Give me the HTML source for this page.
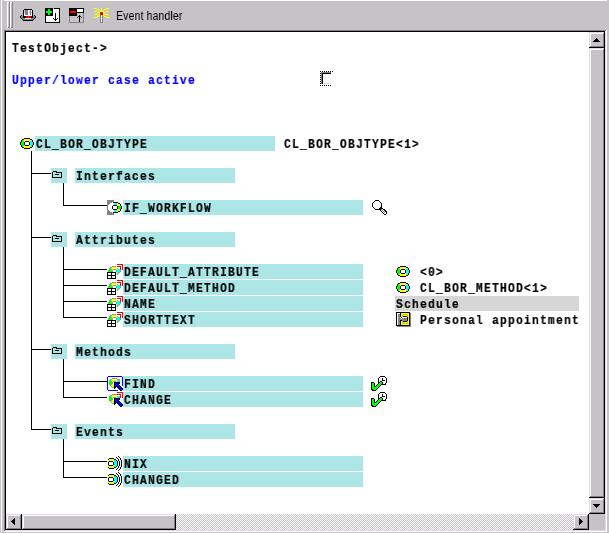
<!DOCTYPE html>
<html><head><meta charset="utf-8"><style>
html,body{margin:0;padding:0;}
body{width:609px;height:533px;overflow:hidden;background:#C6C3C6;position:relative;}
div,span,svg{position:absolute;}
.m{font-family:"Liberation Mono",monospace;font-weight:bold;font-size:13.333px;line-height:15px;white-space:pre;transform-origin:0 0;transform:scaleX(0.85);letter-spacing:1.4118px;-webkit-text-stroke:0.2px currentColor;margin-left:-0.4px;will-change:transform;}
.s{font-family:"Liberation Sans",sans-serif;font-size:12.5px;line-height:18px;white-space:pre;transform-origin:0 0;transform:scaleX(0.86);will-change:transform;}
</style></head><body>
<div style="left:1px;top:0px;width:1px;height:533px;background:#FFFFFF;"></div>
<div style="left:4px;top:0px;width:603px;height:1px;background:#FFFFFF;"></div>
<div style="left:7px;top:2px;width:1px;height:26px;background:#FFFFFF;"></div>
<div style="left:7px;top:2px;width:2px;height:1px;background:#FFFFFF;"></div>
<div style="left:9px;top:2px;width:1px;height:26px;background:#848284;"></div>
<div style="left:8px;top:27px;width:2px;height:1px;background:#848284;"></div>
<div style="left:10px;top:2px;width:1px;height:26px;background:#FFFFFF;"></div>
<div style="left:10px;top:2px;width:2px;height:1px;background:#FFFFFF;"></div>
<div style="left:12px;top:2px;width:1px;height:26px;background:#848284;"></div>
<div style="left:11px;top:27px;width:2px;height:1px;background:#848284;"></div>
<div style="left:4px;top:30px;width:602px;height:1px;background:#848284;"></div>
<div style="left:4px;top:30px;width:1px;height:501px;background:#848284;"></div>
<div style="left:4px;top:531px;width:603px;height:1px;background:#FFFFFF;"></div>
<div style="left:606px;top:30px;width:1px;height:502px;background:#FFFFFF;"></div>
<div style="left:5px;top:31px;width:600px;height:1px;background:#000000;"></div>
<div style="left:5px;top:31px;width:1px;height:499px;background:#000000;"></div>
<div style="left:5px;top:530px;width:601px;height:1px;background:#DEDBDE;"></div>
<div style="left:605px;top:31px;width:1px;height:500px;background:#DEDBDE;"></div>
<div style="left:6px;top:32px;width:583px;height:482px;background:#FFFFFF;"></div>
<div style="left:589px;top:32px;width:16px;height:16px;background:#C6C3C6;"></div>
<div style="left:589px;top:32px;width:16px;height:1px;background:#DEDBDE;"></div>
<div style="left:589px;top:32px;width:1px;height:16px;background:#DEDBDE;"></div>
<div style="left:590px;top:33px;width:14px;height:1px;background:#FFFFFF;"></div>
<div style="left:590px;top:33px;width:1px;height:14px;background:#FFFFFF;"></div>
<div style="left:590px;top:46px;width:14px;height:1px;background:#848284;"></div>
<div style="left:603px;top:33px;width:1px;height:14px;background:#848284;"></div>
<div style="left:589px;top:47px;width:16px;height:1px;background:#000000;"></div>
<div style="left:604px;top:32px;width:1px;height:16px;background:#000000;"></div>
<div style="left:589px;top:48px;width:16px;height:450px;background:#C6C3C6;"></div>
<div style="left:589px;top:48px;width:16px;height:1px;background:#DEDBDE;"></div>
<div style="left:589px;top:48px;width:1px;height:450px;background:#DEDBDE;"></div>
<div style="left:590px;top:49px;width:14px;height:1px;background:#FFFFFF;"></div>
<div style="left:590px;top:49px;width:1px;height:448px;background:#FFFFFF;"></div>
<div style="left:590px;top:496px;width:14px;height:1px;background:#848284;"></div>
<div style="left:603px;top:49px;width:1px;height:448px;background:#848284;"></div>
<div style="left:589px;top:497px;width:16px;height:1px;background:#000000;"></div>
<div style="left:604px;top:48px;width:1px;height:450px;background:#000000;"></div>
<div style="left:589px;top:498px;width:16px;height:16px;background:#C6C3C6;"></div>
<div style="left:589px;top:498px;width:16px;height:1px;background:#DEDBDE;"></div>
<div style="left:589px;top:498px;width:1px;height:16px;background:#DEDBDE;"></div>
<div style="left:590px;top:499px;width:14px;height:1px;background:#FFFFFF;"></div>
<div style="left:590px;top:499px;width:1px;height:14px;background:#FFFFFF;"></div>
<div style="left:590px;top:512px;width:14px;height:1px;background:#848284;"></div>
<div style="left:603px;top:499px;width:1px;height:14px;background:#848284;"></div>
<div style="left:589px;top:513px;width:16px;height:1px;background:#000000;"></div>
<div style="left:604px;top:498px;width:1px;height:16px;background:#000000;"></div>
<div style="left:6px;top:514px;width:16px;height:16px;background:#C6C3C6;"></div>
<div style="left:6px;top:514px;width:16px;height:1px;background:#DEDBDE;"></div>
<div style="left:6px;top:514px;width:1px;height:16px;background:#DEDBDE;"></div>
<div style="left:7px;top:515px;width:14px;height:1px;background:#FFFFFF;"></div>
<div style="left:7px;top:515px;width:1px;height:14px;background:#FFFFFF;"></div>
<div style="left:7px;top:528px;width:14px;height:1px;background:#848284;"></div>
<div style="left:20px;top:515px;width:1px;height:14px;background:#848284;"></div>
<div style="left:6px;top:529px;width:16px;height:1px;background:#000000;"></div>
<div style="left:21px;top:514px;width:1px;height:16px;background:#000000;"></div>
<div style="left:22px;top:514px;width:154px;height:16px;background:#C6C3C6;"></div>
<div style="left:22px;top:514px;width:154px;height:1px;background:#DEDBDE;"></div>
<div style="left:22px;top:514px;width:1px;height:16px;background:#DEDBDE;"></div>
<div style="left:23px;top:515px;width:152px;height:1px;background:#FFFFFF;"></div>
<div style="left:23px;top:515px;width:1px;height:14px;background:#FFFFFF;"></div>
<div style="left:23px;top:528px;width:152px;height:1px;background:#848284;"></div>
<div style="left:174px;top:515px;width:1px;height:14px;background:#848284;"></div>
<div style="left:22px;top:529px;width:154px;height:1px;background:#000000;"></div>
<div style="left:175px;top:514px;width:1px;height:16px;background:#000000;"></div>
<div style="left:176px;top:514px;width:397px;height:16px;background-color:#FFFFFF;background-image:linear-gradient(45deg,#C6C3C6 25%,transparent 25%,transparent 75%,#C6C3C6 75%),linear-gradient(45deg,#C6C3C6 25%,transparent 25%,transparent 75%,#C6C3C6 75%);background-size:2px 2px;background-position:0 0,1px 1px;"></div>
<div style="left:573px;top:514px;width:16px;height:16px;background:#C6C3C6;"></div>
<div style="left:573px;top:514px;width:16px;height:1px;background:#DEDBDE;"></div>
<div style="left:573px;top:514px;width:1px;height:16px;background:#DEDBDE;"></div>
<div style="left:574px;top:515px;width:14px;height:1px;background:#FFFFFF;"></div>
<div style="left:574px;top:515px;width:1px;height:14px;background:#FFFFFF;"></div>
<div style="left:574px;top:528px;width:14px;height:1px;background:#848284;"></div>
<div style="left:587px;top:515px;width:1px;height:14px;background:#848284;"></div>
<div style="left:573px;top:529px;width:16px;height:1px;background:#000000;"></div>
<div style="left:588px;top:514px;width:1px;height:16px;background:#000000;"></div>
<div style="left:589px;top:514px;width:16px;height:16px;background:#C6C3C6;"></div>
<svg style="position:absolute;left:593px;top:38px" width="7" height="4" shape-rendering="crispEdges"><rect x="3" y="0" width="1" height="1" fill="#000000"/><rect x="2" y="1" width="3" height="1" fill="#000000"/><rect x="1" y="2" width="5" height="1" fill="#000000"/><rect x="0" y="3" width="7" height="1" fill="#000000"/></svg>
<svg style="position:absolute;left:593px;top:504px" width="7" height="4" shape-rendering="crispEdges"><rect x="0" y="0" width="7" height="1" fill="#000000"/><rect x="1" y="1" width="5" height="1" fill="#000000"/><rect x="2" y="2" width="3" height="1" fill="#000000"/><rect x="3" y="3" width="1" height="1" fill="#000000"/></svg>
<svg style="position:absolute;left:11px;top:518px" width="4" height="7" shape-rendering="crispEdges"><rect x="3" y="0" width="1" height="1" fill="#000000"/><rect x="2" y="1" width="2" height="1" fill="#000000"/><rect x="1" y="2" width="3" height="1" fill="#000000"/><rect x="0" y="3" width="4" height="1" fill="#000000"/><rect x="1" y="4" width="3" height="1" fill="#000000"/><rect x="2" y="5" width="2" height="1" fill="#000000"/><rect x="3" y="6" width="1" height="1" fill="#000000"/></svg>
<svg style="position:absolute;left:579px;top:518px" width="4" height="7" shape-rendering="crispEdges"><rect x="0" y="0" width="1" height="1" fill="#000000"/><rect x="0" y="1" width="2" height="1" fill="#000000"/><rect x="0" y="2" width="3" height="1" fill="#000000"/><rect x="0" y="3" width="4" height="1" fill="#000000"/><rect x="0" y="4" width="3" height="1" fill="#000000"/><rect x="0" y="5" width="2" height="1" fill="#000000"/><rect x="0" y="6" width="1" height="1" fill="#000000"/></svg>
<svg style="position:absolute;left:19px;top:8px" width="17" height="13" shape-rendering="crispEdges"><rect x="5" y="1" width="8" height="1" fill="#000000"/><rect x="4" y="2" width="1" height="1" fill="#000000"/><rect x="5" y="2" width="1" height="1" fill="#C6C3C6"/><rect x="6" y="2" width="3" height="1" fill="#848284"/><rect x="9" y="2" width="2" height="1" fill="#FFFFFF"/><rect x="11" y="2" width="1" height="1" fill="#848284"/><rect x="12" y="2" width="1" height="1" fill="#FFFFFF"/><rect x="13" y="2" width="1" height="1" fill="#000000"/><rect x="4" y="3" width="1" height="1" fill="#000000"/><rect x="5" y="3" width="1" height="1" fill="#C6C3C6"/><rect x="6" y="3" width="3" height="1" fill="#848284"/><rect x="9" y="3" width="1" height="1" fill="#FFFFFF"/><rect x="10" y="3" width="1" height="1" fill="#C6C3C6"/><rect x="11" y="3" width="1" height="1" fill="#848284"/><rect x="12" y="3" width="1" height="1" fill="#FFFFFF"/><rect x="13" y="3" width="1" height="1" fill="#000000"/><rect x="4" y="4" width="1" height="1" fill="#000000"/><rect x="5" y="4" width="1" height="1" fill="#C6C3C6"/><rect x="6" y="4" width="3" height="1" fill="#848284"/><rect x="9" y="4" width="1" height="1" fill="#FFFFFF"/><rect x="10" y="4" width="1" height="1" fill="#C6C3C6"/><rect x="11" y="4" width="1" height="1" fill="#848284"/><rect x="12" y="4" width="1" height="1" fill="#C6C3C6"/><rect x="13" y="4" width="1" height="1" fill="#000000"/><rect x="4" y="5" width="1" height="1" fill="#000000"/><rect x="5" y="5" width="1" height="1" fill="#FFFFFF"/><rect x="6" y="5" width="3" height="1" fill="#848284"/><rect x="9" y="5" width="2" height="1" fill="#FFFFFF"/><rect x="11" y="5" width="1" height="1" fill="#848284"/><rect x="12" y="5" width="1" height="1" fill="#FFFFFF"/><rect x="13" y="5" width="1" height="1" fill="#000000"/><rect x="4" y="6" width="1" height="1" fill="#000000"/><rect x="5" y="6" width="1" height="1" fill="#FFFFFF"/><rect x="6" y="6" width="3" height="1" fill="#848284"/><rect x="9" y="6" width="2" height="1" fill="#FFFFFF"/><rect x="11" y="6" width="1" height="1" fill="#848284"/><rect x="12" y="6" width="1" height="1" fill="#FFFFFF"/><rect x="13" y="6" width="1" height="1" fill="#000000"/><rect x="2" y="7" width="1" height="1" fill="#000000"/><rect x="4" y="7" width="1" height="1" fill="#000000"/><rect x="5" y="7" width="8" height="1" fill="#FFFFFF"/><rect x="13" y="7" width="1" height="1" fill="#000000"/><rect x="15" y="7" width="1" height="1" fill="#000000"/><rect x="1" y="8" width="1" height="1" fill="#000000"/><rect x="2" y="8" width="2" height="1" fill="#848284"/><rect x="4" y="8" width="3" height="1" fill="#000000"/><rect x="7" y="8" width="5" height="1" fill="#FF0000"/><rect x="12" y="8" width="2" height="1" fill="#000000"/><rect x="14" y="8" width="2" height="1" fill="#848284"/><rect x="16" y="8" width="1" height="1" fill="#000000"/><rect x="1" y="9" width="1" height="1" fill="#000000"/><rect x="2" y="9" width="2" height="1" fill="#848284"/><rect x="4" y="9" width="3" height="1" fill="#000000"/><rect x="7" y="9" width="5" height="1" fill="#FF0000"/><rect x="12" y="9" width="2" height="1" fill="#000000"/><rect x="14" y="9" width="2" height="1" fill="#848284"/><rect x="16" y="9" width="1" height="1" fill="#000000"/><rect x="2" y="10" width="1" height="1" fill="#000000"/><rect x="3" y="10" width="3" height="1" fill="#848284"/><rect x="6" y="10" width="6" height="1" fill="#FFFFFF"/><rect x="12" y="10" width="3" height="1" fill="#848284"/><rect x="15" y="10" width="1" height="1" fill="#000000"/><rect x="3" y="11" width="1" height="1" fill="#000000"/><rect x="4" y="11" width="10" height="1" fill="#848284"/><rect x="14" y="11" width="1" height="1" fill="#000000"/><rect x="4" y="12" width="10" height="1" fill="#000000"/></svg>
<svg style="position:absolute;left:45px;top:8px" width="15" height="15" shape-rendering="crispEdges"><rect x="0" y="0" width="8" height="1" fill="#000000"/><rect x="9" y="0" width="6" height="1" fill="#000000"/><rect x="0" y="1" width="3" height="1" fill="#000000"/><rect x="3" y="1" width="2" height="1" fill="#00FF00"/><rect x="5" y="1" width="3" height="1" fill="#000000"/><rect x="8" y="1" width="6" height="1" fill="#FFFFFF"/><rect x="14" y="1" width="1" height="1" fill="#000000"/><rect x="0" y="2" width="3" height="1" fill="#000000"/><rect x="3" y="2" width="2" height="1" fill="#00FF00"/><rect x="5" y="2" width="3" height="1" fill="#000000"/><rect x="8" y="2" width="6" height="1" fill="#FFFFFF"/><rect x="14" y="2" width="1" height="1" fill="#000000"/><rect x="0" y="3" width="1" height="1" fill="#000000"/><rect x="1" y="3" width="6" height="1" fill="#00FF00"/><rect x="7" y="3" width="1" height="1" fill="#000000"/><rect x="8" y="3" width="6" height="1" fill="#FFFFFF"/><rect x="14" y="3" width="1" height="1" fill="#000000"/><rect x="0" y="4" width="1" height="1" fill="#000000"/><rect x="1" y="4" width="6" height="1" fill="#00FF00"/><rect x="7" y="4" width="1" height="1" fill="#000000"/><rect x="8" y="4" width="6" height="1" fill="#FFFFFF"/><rect x="14" y="4" width="1" height="1" fill="#000000"/><rect x="0" y="5" width="3" height="1" fill="#000000"/><rect x="3" y="5" width="2" height="1" fill="#00FF00"/><rect x="5" y="5" width="3" height="1" fill="#000000"/><rect x="8" y="5" width="2" height="1" fill="#FFFFFF"/><rect x="10" y="5" width="1" height="1" fill="#000000"/><rect x="11" y="5" width="3" height="1" fill="#FFFFFF"/><rect x="14" y="5" width="1" height="1" fill="#000000"/><rect x="0" y="6" width="3" height="1" fill="#000000"/><rect x="3" y="6" width="2" height="1" fill="#00FF00"/><rect x="5" y="6" width="3" height="1" fill="#000000"/><rect x="8" y="6" width="2" height="1" fill="#FFFFFF"/><rect x="10" y="6" width="1" height="1" fill="#000000"/><rect x="11" y="6" width="3" height="1" fill="#FFFFFF"/><rect x="14" y="6" width="1" height="1" fill="#000000"/><rect x="0" y="7" width="8" height="1" fill="#000000"/><rect x="8" y="7" width="2" height="1" fill="#FFFFFF"/><rect x="10" y="7" width="1" height="1" fill="#000000"/><rect x="11" y="7" width="3" height="1" fill="#FFFFFF"/><rect x="14" y="7" width="1" height="1" fill="#000000"/><rect x="0" y="8" width="1" height="1" fill="#000000"/><rect x="1" y="8" width="9" height="1" fill="#FFFFFF"/><rect x="10" y="8" width="1" height="1" fill="#000000"/><rect x="11" y="8" width="3" height="1" fill="#FFFFFF"/><rect x="14" y="8" width="1" height="1" fill="#000000"/><rect x="0" y="9" width="1" height="1" fill="#000000"/><rect x="1" y="9" width="9" height="1" fill="#FFFFFF"/><rect x="10" y="9" width="1" height="1" fill="#000000"/><rect x="11" y="9" width="3" height="1" fill="#FFFFFF"/><rect x="14" y="9" width="1" height="1" fill="#000000"/><rect x="0" y="10" width="1" height="1" fill="#000000"/><rect x="1" y="10" width="7" height="1" fill="#FFFFFF"/><rect x="8" y="10" width="1" height="1" fill="#000000"/><rect x="9" y="10" width="1" height="1" fill="#FFFFFF"/><rect x="10" y="10" width="1" height="1" fill="#000000"/><rect x="11" y="10" width="1" height="1" fill="#FFFFFF"/><rect x="12" y="10" width="1" height="1" fill="#000000"/><rect x="13" y="10" width="1" height="1" fill="#FFFFFF"/><rect x="14" y="10" width="1" height="1" fill="#000000"/><rect x="0" y="11" width="1" height="1" fill="#000000"/><rect x="1" y="11" width="8" height="1" fill="#FFFFFF"/><rect x="9" y="11" width="3" height="1" fill="#000000"/><rect x="12" y="11" width="2" height="1" fill="#FFFFFF"/><rect x="14" y="11" width="1" height="1" fill="#000000"/><rect x="0" y="12" width="1" height="1" fill="#000000"/><rect x="1" y="12" width="9" height="1" fill="#FFFFFF"/><rect x="10" y="12" width="1" height="1" fill="#000000"/><rect x="11" y="12" width="3" height="1" fill="#FFFFFF"/><rect x="14" y="12" width="1" height="1" fill="#000000"/><rect x="0" y="13" width="1" height="1" fill="#000000"/><rect x="1" y="13" width="13" height="1" fill="#FFFFFF"/><rect x="14" y="13" width="1" height="1" fill="#000000"/><rect x="0" y="14" width="15" height="1" fill="#000000"/></svg>
<svg style="position:absolute;left:69px;top:8px" width="15" height="15" shape-rendering="crispEdges"><rect x="0" y="0" width="15" height="1" fill="#000000"/><rect x="0" y="1" width="8" height="1" fill="#000000"/><rect x="8" y="1" width="6" height="1" fill="#FFFFFF"/><rect x="14" y="1" width="1" height="1" fill="#000000"/><rect x="0" y="2" width="8" height="1" fill="#000000"/><rect x="8" y="2" width="6" height="1" fill="#FFFFFF"/><rect x="14" y="2" width="1" height="1" fill="#000000"/><rect x="0" y="3" width="1" height="1" fill="#000000"/><rect x="1" y="3" width="6" height="1" fill="#FF0000"/><rect x="7" y="3" width="1" height="1" fill="#000000"/><rect x="8" y="3" width="6" height="1" fill="#FFFFFF"/><rect x="14" y="3" width="1" height="1" fill="#000000"/><rect x="0" y="4" width="1" height="1" fill="#000000"/><rect x="1" y="4" width="6" height="1" fill="#FF0000"/><rect x="7" y="4" width="8" height="1" fill="#000000"/><rect x="0" y="5" width="8" height="1" fill="#000000"/><rect x="8" y="5" width="6" height="1" fill="#C6C3C6"/><rect x="14" y="5" width="1" height="1" fill="#848284"/><rect x="0" y="6" width="8" height="1" fill="#000000"/><rect x="8" y="6" width="6" height="1" fill="#C6C3C6"/><rect x="14" y="6" width="1" height="1" fill="#848284"/><rect x="0" y="7" width="8" height="1" fill="#000000"/><rect x="8" y="7" width="2" height="1" fill="#C6C3C6"/><rect x="10" y="7" width="1" height="1" fill="#000000"/><rect x="11" y="7" width="3" height="1" fill="#C6C3C6"/><rect x="14" y="7" width="1" height="1" fill="#848284"/><rect x="0" y="8" width="1" height="1" fill="#848284"/><rect x="1" y="8" width="8" height="1" fill="#C6C3C6"/><rect x="9" y="8" width="3" height="1" fill="#000000"/><rect x="12" y="8" width="2" height="1" fill="#C6C3C6"/><rect x="14" y="8" width="1" height="1" fill="#848284"/><rect x="0" y="9" width="1" height="1" fill="#848284"/><rect x="1" y="9" width="7" height="1" fill="#C6C3C6"/><rect x="8" y="9" width="1" height="1" fill="#000000"/><rect x="9" y="9" width="1" height="1" fill="#C6C3C6"/><rect x="10" y="9" width="1" height="1" fill="#000000"/><rect x="11" y="9" width="1" height="1" fill="#C6C3C6"/><rect x="12" y="9" width="1" height="1" fill="#000000"/><rect x="13" y="9" width="1" height="1" fill="#C6C3C6"/><rect x="14" y="9" width="1" height="1" fill="#848284"/><rect x="0" y="10" width="1" height="1" fill="#848284"/><rect x="1" y="10" width="9" height="1" fill="#C6C3C6"/><rect x="10" y="10" width="1" height="1" fill="#000000"/><rect x="11" y="10" width="3" height="1" fill="#C6C3C6"/><rect x="14" y="10" width="1" height="1" fill="#848284"/><rect x="0" y="11" width="1" height="1" fill="#848284"/><rect x="1" y="11" width="9" height="1" fill="#C6C3C6"/><rect x="10" y="11" width="1" height="1" fill="#000000"/><rect x="11" y="11" width="3" height="1" fill="#C6C3C6"/><rect x="14" y="11" width="1" height="1" fill="#848284"/><rect x="0" y="12" width="1" height="1" fill="#848284"/><rect x="1" y="12" width="9" height="1" fill="#C6C3C6"/><rect x="10" y="12" width="1" height="1" fill="#000000"/><rect x="11" y="12" width="3" height="1" fill="#C6C3C6"/><rect x="14" y="12" width="1" height="1" fill="#848284"/><rect x="0" y="13" width="1" height="1" fill="#848284"/><rect x="1" y="13" width="9" height="1" fill="#C6C3C6"/><rect x="10" y="13" width="1" height="1" fill="#000000"/><rect x="11" y="13" width="3" height="1" fill="#C6C3C6"/><rect x="14" y="13" width="1" height="1" fill="#848284"/><rect x="0" y="14" width="15" height="1" fill="#848284"/></svg>
<svg style="position:absolute;left:94px;top:8px" width="15" height="15" shape-rendering="crispEdges"><rect x="0" y="0" width="3" height="1" fill="#FFFF00"/><rect x="7" y="0" width="1" height="1" fill="#FFFF00"/><rect x="12" y="0" width="3" height="1" fill="#FFFF00"/><rect x="3" y="1" width="2" height="1" fill="#FFFF00"/><rect x="7" y="1" width="1" height="1" fill="#FFFF00"/><rect x="10" y="1" width="2" height="1" fill="#FFFF00"/><rect x="5" y="2" width="1" height="1" fill="#FFFF00"/><rect x="7" y="2" width="1" height="1" fill="#FFFF00"/><rect x="9" y="2" width="1" height="1" fill="#FFFF00"/><rect x="0" y="3" width="3" height="1" fill="#FFFF00"/><rect x="5" y="3" width="5" height="1" fill="#FFFF00"/><rect x="12" y="3" width="3" height="1" fill="#FFFF00"/><rect x="3" y="4" width="3" height="1" fill="#FFFF00"/><rect x="6" y="4" width="3" height="1" fill="#FF0000"/><rect x="9" y="4" width="3" height="1" fill="#FFFF00"/><rect x="5" y="5" width="1" height="1" fill="#FFFF00"/><rect x="6" y="5" width="1" height="1" fill="#FF0000"/><rect x="7" y="5" width="2" height="1" fill="#C60000"/><rect x="9" y="5" width="1" height="1" fill="#FFFF00"/><rect x="0" y="6" width="6" height="1" fill="#FFFF00"/><rect x="6" y="6" width="1" height="1" fill="#FF0000"/><rect x="7" y="6" width="2" height="1" fill="#C60000"/><rect x="9" y="6" width="6" height="1" fill="#FFFF00"/><rect x="5" y="7" width="1" height="1" fill="#FFFF00"/><rect x="6" y="7" width="1" height="1" fill="#848284"/><rect x="7" y="7" width="1" height="1" fill="#FFFFFF"/><rect x="8" y="7" width="1" height="1" fill="#848284"/><rect x="9" y="7" width="1" height="1" fill="#FFFF00"/><rect x="3" y="8" width="2" height="1" fill="#FFFF00"/><rect x="6" y="8" width="1" height="1" fill="#848284"/><rect x="7" y="8" width="1" height="1" fill="#FFFFFF"/><rect x="8" y="8" width="1" height="1" fill="#848284"/><rect x="10" y="8" width="2" height="1" fill="#FFFF00"/><rect x="0" y="9" width="3" height="1" fill="#FFFF00"/><rect x="6" y="9" width="1" height="1" fill="#848284"/><rect x="7" y="9" width="1" height="1" fill="#FFFFFF"/><rect x="8" y="9" width="1" height="1" fill="#848284"/><rect x="12" y="9" width="3" height="1" fill="#FFFF00"/><rect x="6" y="10" width="1" height="1" fill="#848284"/><rect x="7" y="10" width="1" height="1" fill="#FFFFFF"/><rect x="8" y="10" width="1" height="1" fill="#848284"/><rect x="6" y="11" width="1" height="1" fill="#848284"/><rect x="7" y="11" width="1" height="1" fill="#FFFFFF"/><rect x="8" y="11" width="1" height="1" fill="#848284"/><rect x="6" y="12" width="1" height="1" fill="#848284"/><rect x="7" y="12" width="1" height="1" fill="#FFFFFF"/><rect x="8" y="12" width="1" height="1" fill="#848284"/><rect x="6" y="13" width="1" height="1" fill="#848284"/><rect x="7" y="13" width="1" height="1" fill="#FFFFFF"/><rect x="8" y="13" width="1" height="1" fill="#848284"/><rect x="6" y="14" width="3" height="1" fill="#848284"/></svg>
<span class="s" style="left:116px;top:7px;color:#000">Event handler</span>
<span class="m" style="left:12px;top:41px;color:#000">TestObject-&gt;</span>
<span class="m" style="left:12px;top:73px;color:#0000FF">Upper/lower case active</span>
<div style="left:320px;top:71px;width:1px;height:1px;background:#000;"></div>
<div style="left:322px;top:71px;width:1px;height:1px;background:#000;"></div>
<div style="left:324px;top:71px;width:1px;height:1px;background:#000;"></div>
<div style="left:326px;top:71px;width:1px;height:1px;background:#000;"></div>
<div style="left:328px;top:71px;width:1px;height:1px;background:#000;"></div>
<div style="left:330px;top:71px;width:1px;height:1px;background:#000;"></div>
<div style="left:332px;top:71px;width:1px;height:1px;background:#000;"></div>
<div style="left:320px;top:73px;width:1px;height:1px;background:#000;"></div>
<div style="left:320px;top:75px;width:1px;height:1px;background:#000;"></div>
<div style="left:320px;top:77px;width:1px;height:1px;background:#000;"></div>
<div style="left:320px;top:79px;width:1px;height:1px;background:#000;"></div>
<div style="left:320px;top:81px;width:1px;height:1px;background:#000;"></div>
<div style="left:320px;top:83px;width:1px;height:1px;background:#000;"></div>
<div style="left:320px;top:85px;width:1px;height:1px;background:#000;"></div>
<div style="left:322px;top:85px;width:1px;height:1px;background:#000;"></div>
<div style="left:324px;top:85px;width:1px;height:1px;background:#000;"></div>
<div style="left:326px;top:85px;width:1px;height:1px;background:#000;"></div>
<div style="left:328px;top:85px;width:1px;height:1px;background:#000;"></div>
<div style="left:330px;top:85px;width:1px;height:1px;background:#000;"></div>
<div style="left:321px;top:72px;width:10px;height:1px;background:#848284;"></div>
<div style="left:321px;top:72px;width:1px;height:12px;background:#848284;"></div>
<div style="left:322px;top:73px;width:9px;height:1px;background:#000;"></div>
<div style="left:322px;top:73px;width:1px;height:11px;background:#000;"></div>
<div style="left:323px;top:83px;width:8px;height:1px;background:#DEDBDE;"></div>
<svg style="position:absolute;left:20px;top:138px" width="14" height="11" shape-rendering="crispEdges"><rect x="4" y="0" width="6" height="1" fill="#000000"/><rect x="2" y="1" width="2" height="1" fill="#000000"/><rect x="4" y="1" width="6" height="1" fill="#FFFF00"/><rect x="10" y="1" width="2" height="1" fill="#000000"/><rect x="1" y="2" width="1" height="1" fill="#000000"/><rect x="2" y="2" width="1" height="1" fill="#00FF00"/><rect x="3" y="2" width="8" height="1" fill="#FFFF00"/><rect x="11" y="2" width="1" height="1" fill="#00FFFF"/><rect x="12" y="2" width="1" height="1" fill="#000000"/><rect x="1" y="3" width="1" height="1" fill="#000000"/><rect x="2" y="3" width="2" height="1" fill="#00FF00"/><rect x="4" y="3" width="1" height="1" fill="#FFFF00"/><rect x="5" y="3" width="4" height="1" fill="#000000"/><rect x="9" y="3" width="1" height="1" fill="#FFFF00"/><rect x="10" y="3" width="2" height="1" fill="#00FFFF"/><rect x="12" y="3" width="1" height="1" fill="#000000"/><rect x="0" y="4" width="1" height="1" fill="#000000"/><rect x="1" y="4" width="3" height="1" fill="#00FF00"/><rect x="4" y="4" width="1" height="1" fill="#000000"/><rect x="5" y="4" width="4" height="1" fill="#FFFFFF"/><rect x="9" y="4" width="1" height="1" fill="#000000"/><rect x="10" y="4" width="3" height="1" fill="#00FFFF"/><rect x="13" y="4" width="1" height="1" fill="#000000"/><rect x="0" y="5" width="1" height="1" fill="#000000"/><rect x="1" y="5" width="3" height="1" fill="#00FF00"/><rect x="4" y="5" width="1" height="1" fill="#000000"/><rect x="5" y="5" width="4" height="1" fill="#FFFFFF"/><rect x="9" y="5" width="1" height="1" fill="#000000"/><rect x="10" y="5" width="3" height="1" fill="#00FFFF"/><rect x="13" y="5" width="1" height="1" fill="#000000"/><rect x="0" y="6" width="1" height="1" fill="#000000"/><rect x="1" y="6" width="3" height="1" fill="#00FF00"/><rect x="4" y="6" width="1" height="1" fill="#000000"/><rect x="5" y="6" width="4" height="1" fill="#FFFFFF"/><rect x="9" y="6" width="1" height="1" fill="#000000"/><rect x="10" y="6" width="3" height="1" fill="#00FFFF"/><rect x="13" y="6" width="1" height="1" fill="#000000"/><rect x="1" y="7" width="1" height="1" fill="#000000"/><rect x="2" y="7" width="2" height="1" fill="#00FF00"/><rect x="4" y="7" width="1" height="1" fill="#FFFF00"/><rect x="5" y="7" width="4" height="1" fill="#000000"/><rect x="9" y="7" width="1" height="1" fill="#FFFF00"/><rect x="10" y="7" width="2" height="1" fill="#00FFFF"/><rect x="12" y="7" width="1" height="1" fill="#000000"/><rect x="1" y="8" width="1" height="1" fill="#000000"/><rect x="2" y="8" width="1" height="1" fill="#00FF00"/><rect x="3" y="8" width="8" height="1" fill="#FFFF00"/><rect x="11" y="8" width="1" height="1" fill="#00FFFF"/><rect x="12" y="8" width="1" height="1" fill="#000000"/><rect x="2" y="9" width="2" height="1" fill="#000000"/><rect x="4" y="9" width="6" height="1" fill="#FFFF00"/><rect x="10" y="9" width="2" height="1" fill="#000000"/><rect x="4" y="10" width="6" height="1" fill="#000000"/></svg>
<div style="left:35px;top:136px;width:240px;height:15px;background:#ADE6E6;"></div>
<span class="m" style="left:36px;top:137px;color:#000">CL_BOR_OBJTYPE</span>
<span class="m" style="left:284px;top:137px;color:#000">CL_BOR_OBJTYPE&lt;1&gt;</span>
<div style="left:31px;top:151px;width:1px;height:279px;background:#000000;"></div>
<div style="left:31px;top:173px;width:20px;height:1px;background:#000000;"></div>
<div style="left:51px;top:168px;width:16px;height:15px;background:#ADE6E6;"></div>
<svg style="position:absolute;left:50px;top:171px" width="12" height="7" shape-rendering="crispEdges"><rect x="3" y="0" width="4" height="1" fill="#000000"/><rect x="2" y="1" width="1" height="1" fill="#000000"/><rect x="6" y="1" width="6" height="1" fill="#000000"/><rect x="2" y="2" width="1" height="1" fill="#000000"/><rect x="11" y="2" width="1" height="1" fill="#000000"/><rect x="2" y="3" width="1" height="1" fill="#000000"/><rect x="5" y="3" width="4" height="1" fill="#000000"/><rect x="11" y="3" width="1" height="1" fill="#000000"/><rect x="2" y="4" width="1" height="1" fill="#000000"/><rect x="11" y="4" width="1" height="1" fill="#000000"/><rect x="2" y="5" width="1" height="1" fill="#000000"/><rect x="11" y="5" width="1" height="1" fill="#000000"/><rect x="2" y="6" width="10" height="1" fill="#000000"/></svg>
<div style="left:75px;top:168px;width:160px;height:15px;background:#ADE6E6;"></div>
<span class="m" style="left:76px;top:169px;color:#000">Interfaces</span>
<div style="left:63px;top:183px;width:1px;height:23px;background:#000000;"></div>
<div style="left:63px;top:205px;width:44px;height:1px;background:#000000;"></div>
<div style="left:123px;top:200px;width:240px;height:15px;background:#ADE6E6;"></div>
<span class="m" style="left:124px;top:201px;color:#000">IF_WORKFLOW</span>
<svg style="position:absolute;left:106px;top:200px" width="17" height="15" shape-rendering="crispEdges"><rect x="1" y="0" width="7" height="1" fill="#848284"/><rect x="1" y="1" width="7" height="1" fill="#848284"/><rect x="1" y="2" width="5" height="1" fill="#848284"/><rect x="6" y="2" width="1" height="1" fill="#FFFFFF"/><rect x="7" y="2" width="5" height="1" fill="#000000"/><rect x="1" y="3" width="3" height="1" fill="#848284"/><rect x="4" y="3" width="4" height="1" fill="#FFFFFF"/><rect x="8" y="3" width="3" height="1" fill="#00FFFF"/><rect x="11" y="3" width="1" height="1" fill="#FFFF00"/><rect x="12" y="3" width="2" height="1" fill="#000000"/><rect x="1" y="4" width="2" height="1" fill="#848284"/><rect x="3" y="4" width="5" height="1" fill="#FFFFFF"/><rect x="8" y="4" width="3" height="1" fill="#00FFFF"/><rect x="11" y="4" width="3" height="1" fill="#FFFF00"/><rect x="14" y="4" width="1" height="1" fill="#000000"/><rect x="1" y="5" width="1" height="1" fill="#848284"/><rect x="2" y="5" width="5" height="1" fill="#FFFFFF"/><rect x="7" y="5" width="4" height="1" fill="#000000"/><rect x="11" y="5" width="3" height="1" fill="#FFFF00"/><rect x="14" y="5" width="1" height="1" fill="#000000"/><rect x="1" y="6" width="1" height="1" fill="#848284"/><rect x="2" y="6" width="4" height="1" fill="#FFFFFF"/><rect x="6" y="6" width="1" height="1" fill="#000000"/><rect x="7" y="6" width="4" height="1" fill="#FFFFFF"/><rect x="11" y="6" width="1" height="1" fill="#000000"/><rect x="12" y="6" width="3" height="1" fill="#00FF00"/><rect x="15" y="6" width="1" height="1" fill="#000000"/><rect x="1" y="7" width="1" height="1" fill="#848284"/><rect x="2" y="7" width="4" height="1" fill="#FFFFFF"/><rect x="6" y="7" width="1" height="1" fill="#000000"/><rect x="7" y="7" width="4" height="1" fill="#FFFFFF"/><rect x="11" y="7" width="1" height="1" fill="#000000"/><rect x="12" y="7" width="3" height="1" fill="#00FF00"/><rect x="15" y="7" width="1" height="1" fill="#000000"/><rect x="1" y="8" width="1" height="1" fill="#848284"/><rect x="2" y="8" width="4" height="1" fill="#FFFFFF"/><rect x="6" y="8" width="1" height="1" fill="#000000"/><rect x="7" y="8" width="4" height="1" fill="#FFFFFF"/><rect x="11" y="8" width="1" height="1" fill="#000000"/><rect x="12" y="8" width="3" height="1" fill="#00FF00"/><rect x="15" y="8" width="1" height="1" fill="#000000"/><rect x="1" y="9" width="1" height="1" fill="#848284"/><rect x="2" y="9" width="5" height="1" fill="#FFFFFF"/><rect x="7" y="9" width="4" height="1" fill="#000000"/><rect x="11" y="9" width="3" height="1" fill="#FFFF00"/><rect x="14" y="9" width="1" height="1" fill="#000000"/><rect x="1" y="10" width="2" height="1" fill="#848284"/><rect x="3" y="10" width="5" height="1" fill="#FFFFFF"/><rect x="8" y="10" width="3" height="1" fill="#00FFFF"/><rect x="11" y="10" width="3" height="1" fill="#FFFF00"/><rect x="14" y="10" width="1" height="1" fill="#000000"/><rect x="1" y="11" width="3" height="1" fill="#848284"/><rect x="4" y="11" width="4" height="1" fill="#FFFFFF"/><rect x="8" y="11" width="3" height="1" fill="#00FFFF"/><rect x="11" y="11" width="1" height="1" fill="#FFFF00"/><rect x="12" y="11" width="2" height="1" fill="#000000"/><rect x="1" y="12" width="5" height="1" fill="#848284"/><rect x="6" y="12" width="1" height="1" fill="#FFFFFF"/><rect x="7" y="12" width="5" height="1" fill="#000000"/><rect x="1" y="13" width="7" height="1" fill="#848284"/><rect x="1" y="14" width="7" height="1" fill="#848284"/></svg>
<svg style="position:absolute;left:370px;top:200px" width="18" height="15" shape-rendering="crispEdges"><rect x="5" y="0" width="4" height="1" fill="#000000"/><rect x="4" y="1" width="1" height="1" fill="#000000"/><rect x="5" y="1" width="4" height="1" fill="#FFFFFF"/><rect x="9" y="1" width="1" height="1" fill="#000000"/><rect x="3" y="2" width="1" height="1" fill="#000000"/><rect x="4" y="2" width="6" height="1" fill="#FFFFFF"/><rect x="10" y="2" width="1" height="1" fill="#000000"/><rect x="2" y="3" width="1" height="1" fill="#000000"/><rect x="3" y="3" width="8" height="1" fill="#FFFFFF"/><rect x="11" y="3" width="1" height="1" fill="#000000"/><rect x="2" y="4" width="1" height="1" fill="#000000"/><rect x="3" y="4" width="8" height="1" fill="#FFFFFF"/><rect x="11" y="4" width="1" height="1" fill="#000000"/><rect x="2" y="5" width="1" height="1" fill="#000000"/><rect x="3" y="5" width="8" height="1" fill="#FFFFFF"/><rect x="11" y="5" width="1" height="1" fill="#000000"/><rect x="2" y="6" width="1" height="1" fill="#000000"/><rect x="3" y="6" width="8" height="1" fill="#FFFFFF"/><rect x="11" y="6" width="1" height="1" fill="#000000"/><rect x="3" y="7" width="1" height="1" fill="#000000"/><rect x="4" y="7" width="6" height="1" fill="#FFFFFF"/><rect x="10" y="7" width="2" height="1" fill="#000000"/><rect x="4" y="8" width="1" height="1" fill="#000000"/><rect x="5" y="8" width="4" height="1" fill="#FFFFFF"/><rect x="9" y="8" width="4" height="1" fill="#000000"/><rect x="5" y="9" width="6" height="1" fill="#000000"/><rect x="11" y="9" width="1" height="1" fill="#848284"/><rect x="12" y="9" width="1" height="1" fill="#FFFFFF"/><rect x="13" y="9" width="2" height="1" fill="#000000"/><rect x="10" y="10" width="1" height="1" fill="#000000"/><rect x="11" y="10" width="1" height="1" fill="#FFFFFF"/><rect x="12" y="10" width="1" height="1" fill="#848284"/><rect x="13" y="10" width="1" height="1" fill="#FFFFFF"/><rect x="14" y="10" width="2" height="1" fill="#000000"/><rect x="11" y="11" width="1" height="1" fill="#000000"/><rect x="12" y="11" width="1" height="1" fill="#FFFFFF"/><rect x="13" y="11" width="1" height="1" fill="#848284"/><rect x="14" y="11" width="1" height="1" fill="#FFFFFF"/><rect x="15" y="11" width="2" height="1" fill="#000000"/><rect x="12" y="12" width="1" height="1" fill="#000000"/><rect x="13" y="12" width="1" height="1" fill="#FFFFFF"/><rect x="14" y="12" width="1" height="1" fill="#848284"/><rect x="15" y="12" width="1" height="1" fill="#FFFFFF"/><rect x="16" y="12" width="1" height="1" fill="#000000"/><rect x="13" y="13" width="1" height="1" fill="#000000"/><rect x="14" y="13" width="2" height="1" fill="#FFFFFF"/><rect x="16" y="13" width="1" height="1" fill="#000000"/><rect x="14" y="14" width="2" height="1" fill="#000000"/></svg>
<div style="left:31px;top:237px;width:20px;height:1px;background:#000000;"></div>
<div style="left:51px;top:232px;width:16px;height:15px;background:#ADE6E6;"></div>
<svg style="position:absolute;left:50px;top:235px" width="12" height="7" shape-rendering="crispEdges"><rect x="3" y="0" width="4" height="1" fill="#000000"/><rect x="2" y="1" width="1" height="1" fill="#000000"/><rect x="6" y="1" width="6" height="1" fill="#000000"/><rect x="2" y="2" width="1" height="1" fill="#000000"/><rect x="11" y="2" width="1" height="1" fill="#000000"/><rect x="2" y="3" width="1" height="1" fill="#000000"/><rect x="5" y="3" width="4" height="1" fill="#000000"/><rect x="11" y="3" width="1" height="1" fill="#000000"/><rect x="2" y="4" width="1" height="1" fill="#000000"/><rect x="11" y="4" width="1" height="1" fill="#000000"/><rect x="2" y="5" width="1" height="1" fill="#000000"/><rect x="11" y="5" width="1" height="1" fill="#000000"/><rect x="2" y="6" width="10" height="1" fill="#000000"/></svg>
<div style="left:75px;top:232px;width:160px;height:15px;background:#ADE6E6;"></div>
<span class="m" style="left:76px;top:233px;color:#000">Attributes</span>
<div style="left:63px;top:247px;width:1px;height:71px;background:#000000;"></div>
<div style="left:63px;top:269px;width:44px;height:1px;background:#000000;"></div>
<div style="left:123px;top:264px;width:240px;height:15px;background:#ADE6E6;"></div>
<span class="m" style="left:124px;top:265px;color:#000">DEFAULT_ATTRIBUTE</span>
<svg style="position:absolute;left:106px;top:264px" width="17" height="15" shape-rendering="crispEdges"><rect x="11" y="0" width="6" height="1" fill="#FF0000"/><rect x="16" y="1" width="1" height="1" fill="#FF0000"/><rect x="6" y="2" width="4" height="1" fill="#9494B4"/><rect x="11" y="2" width="4" height="1" fill="#FF0000"/><rect x="16" y="2" width="1" height="1" fill="#FF0000"/><rect x="4" y="3" width="2" height="1" fill="#9494B4"/><rect x="6" y="3" width="5" height="1" fill="#FFFF00"/><rect x="14" y="3" width="1" height="1" fill="#FF0000"/><rect x="16" y="3" width="1" height="1" fill="#FF0000"/><rect x="3" y="4" width="1" height="1" fill="#9494B4"/><rect x="4" y="4" width="1" height="1" fill="#00FF00"/><rect x="5" y="4" width="6" height="1" fill="#FFFF00"/><rect x="11" y="4" width="1" height="1" fill="#00FFFF"/><rect x="14" y="4" width="1" height="1" fill="#FF0000"/><rect x="16" y="4" width="1" height="1" fill="#FF0000"/><rect x="3" y="5" width="1" height="1" fill="#9494B4"/><rect x="4" y="5" width="2" height="1" fill="#00FF00"/><rect x="6" y="5" width="1" height="1" fill="#FFFF00"/><rect x="7" y="5" width="3" height="1" fill="#9494B4"/><rect x="10" y="5" width="1" height="1" fill="#FFFF00"/><rect x="11" y="5" width="3" height="1" fill="#00FFFF"/><rect x="14" y="5" width="1" height="1" fill="#FF0000"/><rect x="16" y="5" width="1" height="1" fill="#FF0000"/><rect x="2" y="6" width="1" height="1" fill="#9494B4"/><rect x="3" y="6" width="3" height="1" fill="#00FF00"/><rect x="6" y="6" width="1" height="1" fill="#9494B4"/><rect x="7" y="6" width="3" height="1" fill="#FFFFFF"/><rect x="10" y="6" width="1" height="1" fill="#9494B4"/><rect x="11" y="6" width="3" height="1" fill="#00FFFF"/><rect x="14" y="6" width="1" height="1" fill="#9494B4"/><rect x="2" y="7" width="1" height="1" fill="#9494B4"/><rect x="3" y="7" width="3" height="1" fill="#00FF00"/><rect x="6" y="7" width="1" height="1" fill="#9494B4"/><rect x="7" y="7" width="3" height="1" fill="#FFFFFF"/><rect x="10" y="7" width="1" height="1" fill="#9494B4"/><rect x="11" y="7" width="3" height="1" fill="#00FFFF"/><rect x="14" y="7" width="1" height="1" fill="#9494B4"/><rect x="1" y="8" width="9" height="1" fill="#000000"/><rect x="10" y="8" width="1" height="1" fill="#FFFF00"/><rect x="11" y="8" width="2" height="1" fill="#00FFFF"/><rect x="13" y="8" width="1" height="1" fill="#9494B4"/><rect x="1" y="9" width="1" height="1" fill="#000000"/><rect x="2" y="9" width="3" height="1" fill="#FFFFFF"/><rect x="5" y="9" width="1" height="1" fill="#000000"/><rect x="6" y="9" width="3" height="1" fill="#FFFFFF"/><rect x="9" y="9" width="1" height="1" fill="#000000"/><rect x="10" y="9" width="1" height="1" fill="#FFFF00"/><rect x="11" y="9" width="1" height="1" fill="#00FFFF"/><rect x="12" y="9" width="1" height="1" fill="#9494B4"/><rect x="1" y="10" width="1" height="1" fill="#000000"/><rect x="2" y="10" width="3" height="1" fill="#FFFFFF"/><rect x="5" y="10" width="1" height="1" fill="#000000"/><rect x="6" y="10" width="3" height="1" fill="#FFFFFF"/><rect x="9" y="10" width="1" height="1" fill="#000000"/><rect x="10" y="10" width="1" height="1" fill="#FFFF00"/><rect x="11" y="10" width="1" height="1" fill="#9494B4"/><rect x="1" y="11" width="9" height="1" fill="#000000"/><rect x="1" y="12" width="1" height="1" fill="#000000"/><rect x="2" y="12" width="3" height="1" fill="#FFFFFF"/><rect x="5" y="12" width="1" height="1" fill="#000000"/><rect x="6" y="12" width="3" height="1" fill="#FFFFFF"/><rect x="9" y="12" width="1" height="1" fill="#000000"/><rect x="1" y="13" width="1" height="1" fill="#000000"/><rect x="2" y="13" width="3" height="1" fill="#FFFFFF"/><rect x="5" y="13" width="1" height="1" fill="#000000"/><rect x="6" y="13" width="3" height="1" fill="#FFFFFF"/><rect x="9" y="13" width="1" height="1" fill="#000000"/><rect x="1" y="14" width="9" height="1" fill="#000000"/></svg>
<div style="left:63px;top:285px;width:44px;height:1px;background:#000000;"></div>
<div style="left:123px;top:280px;width:240px;height:15px;background:#ADE6E6;"></div>
<span class="m" style="left:124px;top:281px;color:#000">DEFAULT_METHOD</span>
<svg style="position:absolute;left:106px;top:280px" width="17" height="15" shape-rendering="crispEdges"><rect x="11" y="0" width="6" height="1" fill="#FF0000"/><rect x="16" y="1" width="1" height="1" fill="#FF0000"/><rect x="6" y="2" width="4" height="1" fill="#9494B4"/><rect x="11" y="2" width="4" height="1" fill="#FF0000"/><rect x="16" y="2" width="1" height="1" fill="#FF0000"/><rect x="4" y="3" width="2" height="1" fill="#9494B4"/><rect x="6" y="3" width="5" height="1" fill="#FFFF00"/><rect x="14" y="3" width="1" height="1" fill="#FF0000"/><rect x="16" y="3" width="1" height="1" fill="#FF0000"/><rect x="3" y="4" width="1" height="1" fill="#9494B4"/><rect x="4" y="4" width="1" height="1" fill="#00FF00"/><rect x="5" y="4" width="6" height="1" fill="#FFFF00"/><rect x="11" y="4" width="1" height="1" fill="#00FFFF"/><rect x="14" y="4" width="1" height="1" fill="#FF0000"/><rect x="16" y="4" width="1" height="1" fill="#FF0000"/><rect x="3" y="5" width="1" height="1" fill="#9494B4"/><rect x="4" y="5" width="2" height="1" fill="#00FF00"/><rect x="6" y="5" width="1" height="1" fill="#FFFF00"/><rect x="7" y="5" width="3" height="1" fill="#9494B4"/><rect x="10" y="5" width="1" height="1" fill="#FFFF00"/><rect x="11" y="5" width="3" height="1" fill="#00FFFF"/><rect x="14" y="5" width="1" height="1" fill="#FF0000"/><rect x="16" y="5" width="1" height="1" fill="#FF0000"/><rect x="2" y="6" width="1" height="1" fill="#9494B4"/><rect x="3" y="6" width="3" height="1" fill="#00FF00"/><rect x="6" y="6" width="1" height="1" fill="#9494B4"/><rect x="7" y="6" width="3" height="1" fill="#FFFFFF"/><rect x="10" y="6" width="1" height="1" fill="#9494B4"/><rect x="11" y="6" width="3" height="1" fill="#00FFFF"/><rect x="14" y="6" width="1" height="1" fill="#9494B4"/><rect x="2" y="7" width="1" height="1" fill="#9494B4"/><rect x="3" y="7" width="3" height="1" fill="#00FF00"/><rect x="6" y="7" width="1" height="1" fill="#9494B4"/><rect x="7" y="7" width="3" height="1" fill="#FFFFFF"/><rect x="10" y="7" width="1" height="1" fill="#9494B4"/><rect x="11" y="7" width="3" height="1" fill="#00FFFF"/><rect x="14" y="7" width="1" height="1" fill="#9494B4"/><rect x="1" y="8" width="9" height="1" fill="#000000"/><rect x="10" y="8" width="1" height="1" fill="#FFFF00"/><rect x="11" y="8" width="2" height="1" fill="#00FFFF"/><rect x="13" y="8" width="1" height="1" fill="#9494B4"/><rect x="1" y="9" width="1" height="1" fill="#000000"/><rect x="2" y="9" width="3" height="1" fill="#FFFFFF"/><rect x="5" y="9" width="1" height="1" fill="#000000"/><rect x="6" y="9" width="3" height="1" fill="#FFFFFF"/><rect x="9" y="9" width="1" height="1" fill="#000000"/><rect x="10" y="9" width="1" height="1" fill="#FFFF00"/><rect x="11" y="9" width="1" height="1" fill="#00FFFF"/><rect x="12" y="9" width="1" height="1" fill="#9494B4"/><rect x="1" y="10" width="1" height="1" fill="#000000"/><rect x="2" y="10" width="3" height="1" fill="#FFFFFF"/><rect x="5" y="10" width="1" height="1" fill="#000000"/><rect x="6" y="10" width="3" height="1" fill="#FFFFFF"/><rect x="9" y="10" width="1" height="1" fill="#000000"/><rect x="10" y="10" width="1" height="1" fill="#FFFF00"/><rect x="11" y="10" width="1" height="1" fill="#9494B4"/><rect x="1" y="11" width="9" height="1" fill="#000000"/><rect x="1" y="12" width="1" height="1" fill="#000000"/><rect x="2" y="12" width="3" height="1" fill="#FFFFFF"/><rect x="5" y="12" width="1" height="1" fill="#000000"/><rect x="6" y="12" width="3" height="1" fill="#FFFFFF"/><rect x="9" y="12" width="1" height="1" fill="#000000"/><rect x="1" y="13" width="1" height="1" fill="#000000"/><rect x="2" y="13" width="3" height="1" fill="#FFFFFF"/><rect x="5" y="13" width="1" height="1" fill="#000000"/><rect x="6" y="13" width="3" height="1" fill="#FFFFFF"/><rect x="9" y="13" width="1" height="1" fill="#000000"/><rect x="1" y="14" width="9" height="1" fill="#000000"/></svg>
<div style="left:63px;top:301px;width:44px;height:1px;background:#000000;"></div>
<div style="left:123px;top:296px;width:240px;height:15px;background:#ADE6E6;"></div>
<span class="m" style="left:124px;top:297px;color:#000">NAME</span>
<svg style="position:absolute;left:106px;top:296px" width="17" height="15" shape-rendering="crispEdges"><rect x="11" y="0" width="6" height="1" fill="#FF0000"/><rect x="16" y="1" width="1" height="1" fill="#FF0000"/><rect x="6" y="2" width="4" height="1" fill="#9494B4"/><rect x="11" y="2" width="4" height="1" fill="#FF0000"/><rect x="16" y="2" width="1" height="1" fill="#FF0000"/><rect x="4" y="3" width="2" height="1" fill="#9494B4"/><rect x="6" y="3" width="5" height="1" fill="#FFFF00"/><rect x="14" y="3" width="1" height="1" fill="#FF0000"/><rect x="16" y="3" width="1" height="1" fill="#FF0000"/><rect x="3" y="4" width="1" height="1" fill="#9494B4"/><rect x="4" y="4" width="1" height="1" fill="#00FF00"/><rect x="5" y="4" width="6" height="1" fill="#FFFF00"/><rect x="11" y="4" width="1" height="1" fill="#00FFFF"/><rect x="14" y="4" width="1" height="1" fill="#FF0000"/><rect x="16" y="4" width="1" height="1" fill="#FF0000"/><rect x="3" y="5" width="1" height="1" fill="#9494B4"/><rect x="4" y="5" width="2" height="1" fill="#00FF00"/><rect x="6" y="5" width="1" height="1" fill="#FFFF00"/><rect x="7" y="5" width="3" height="1" fill="#9494B4"/><rect x="10" y="5" width="1" height="1" fill="#FFFF00"/><rect x="11" y="5" width="3" height="1" fill="#00FFFF"/><rect x="14" y="5" width="1" height="1" fill="#FF0000"/><rect x="16" y="5" width="1" height="1" fill="#FF0000"/><rect x="2" y="6" width="1" height="1" fill="#9494B4"/><rect x="3" y="6" width="3" height="1" fill="#00FF00"/><rect x="6" y="6" width="1" height="1" fill="#9494B4"/><rect x="7" y="6" width="3" height="1" fill="#FFFFFF"/><rect x="10" y="6" width="1" height="1" fill="#9494B4"/><rect x="11" y="6" width="3" height="1" fill="#00FFFF"/><rect x="14" y="6" width="1" height="1" fill="#9494B4"/><rect x="2" y="7" width="1" height="1" fill="#9494B4"/><rect x="3" y="7" width="3" height="1" fill="#00FF00"/><rect x="6" y="7" width="1" height="1" fill="#9494B4"/><rect x="7" y="7" width="3" height="1" fill="#FFFFFF"/><rect x="10" y="7" width="1" height="1" fill="#9494B4"/><rect x="11" y="7" width="3" height="1" fill="#00FFFF"/><rect x="14" y="7" width="1" height="1" fill="#9494B4"/><rect x="1" y="8" width="9" height="1" fill="#000000"/><rect x="10" y="8" width="1" height="1" fill="#FFFF00"/><rect x="11" y="8" width="2" height="1" fill="#00FFFF"/><rect x="13" y="8" width="1" height="1" fill="#9494B4"/><rect x="1" y="9" width="1" height="1" fill="#000000"/><rect x="2" y="9" width="3" height="1" fill="#FFFFFF"/><rect x="5" y="9" width="1" height="1" fill="#000000"/><rect x="6" y="9" width="3" height="1" fill="#FFFFFF"/><rect x="9" y="9" width="1" height="1" fill="#000000"/><rect x="10" y="9" width="1" height="1" fill="#FFFF00"/><rect x="11" y="9" width="1" height="1" fill="#00FFFF"/><rect x="12" y="9" width="1" height="1" fill="#9494B4"/><rect x="1" y="10" width="1" height="1" fill="#000000"/><rect x="2" y="10" width="3" height="1" fill="#FFFFFF"/><rect x="5" y="10" width="1" height="1" fill="#000000"/><rect x="6" y="10" width="3" height="1" fill="#FFFFFF"/><rect x="9" y="10" width="1" height="1" fill="#000000"/><rect x="10" y="10" width="1" height="1" fill="#FFFF00"/><rect x="11" y="10" width="1" height="1" fill="#9494B4"/><rect x="1" y="11" width="9" height="1" fill="#000000"/><rect x="1" y="12" width="1" height="1" fill="#000000"/><rect x="2" y="12" width="3" height="1" fill="#FFFFFF"/><rect x="5" y="12" width="1" height="1" fill="#000000"/><rect x="6" y="12" width="3" height="1" fill="#FFFFFF"/><rect x="9" y="12" width="1" height="1" fill="#000000"/><rect x="1" y="13" width="1" height="1" fill="#000000"/><rect x="2" y="13" width="3" height="1" fill="#FFFFFF"/><rect x="5" y="13" width="1" height="1" fill="#000000"/><rect x="6" y="13" width="3" height="1" fill="#FFFFFF"/><rect x="9" y="13" width="1" height="1" fill="#000000"/><rect x="1" y="14" width="9" height="1" fill="#000000"/></svg>
<div style="left:63px;top:317px;width:44px;height:1px;background:#000000;"></div>
<div style="left:123px;top:312px;width:240px;height:15px;background:#ADE6E6;"></div>
<span class="m" style="left:124px;top:313px;color:#000">SHORTTEXT</span>
<svg style="position:absolute;left:106px;top:312px" width="17" height="15" shape-rendering="crispEdges"><rect x="11" y="0" width="6" height="1" fill="#FF0000"/><rect x="16" y="1" width="1" height="1" fill="#FF0000"/><rect x="6" y="2" width="4" height="1" fill="#9494B4"/><rect x="11" y="2" width="4" height="1" fill="#FF0000"/><rect x="16" y="2" width="1" height="1" fill="#FF0000"/><rect x="4" y="3" width="2" height="1" fill="#9494B4"/><rect x="6" y="3" width="5" height="1" fill="#FFFF00"/><rect x="14" y="3" width="1" height="1" fill="#FF0000"/><rect x="16" y="3" width="1" height="1" fill="#FF0000"/><rect x="3" y="4" width="1" height="1" fill="#9494B4"/><rect x="4" y="4" width="1" height="1" fill="#00FF00"/><rect x="5" y="4" width="6" height="1" fill="#FFFF00"/><rect x="11" y="4" width="1" height="1" fill="#00FFFF"/><rect x="14" y="4" width="1" height="1" fill="#FF0000"/><rect x="16" y="4" width="1" height="1" fill="#FF0000"/><rect x="3" y="5" width="1" height="1" fill="#9494B4"/><rect x="4" y="5" width="2" height="1" fill="#00FF00"/><rect x="6" y="5" width="1" height="1" fill="#FFFF00"/><rect x="7" y="5" width="3" height="1" fill="#9494B4"/><rect x="10" y="5" width="1" height="1" fill="#FFFF00"/><rect x="11" y="5" width="3" height="1" fill="#00FFFF"/><rect x="14" y="5" width="1" height="1" fill="#FF0000"/><rect x="16" y="5" width="1" height="1" fill="#FF0000"/><rect x="2" y="6" width="1" height="1" fill="#9494B4"/><rect x="3" y="6" width="3" height="1" fill="#00FF00"/><rect x="6" y="6" width="1" height="1" fill="#9494B4"/><rect x="7" y="6" width="3" height="1" fill="#FFFFFF"/><rect x="10" y="6" width="1" height="1" fill="#9494B4"/><rect x="11" y="6" width="3" height="1" fill="#00FFFF"/><rect x="14" y="6" width="1" height="1" fill="#9494B4"/><rect x="2" y="7" width="1" height="1" fill="#9494B4"/><rect x="3" y="7" width="3" height="1" fill="#00FF00"/><rect x="6" y="7" width="1" height="1" fill="#9494B4"/><rect x="7" y="7" width="3" height="1" fill="#FFFFFF"/><rect x="10" y="7" width="1" height="1" fill="#9494B4"/><rect x="11" y="7" width="3" height="1" fill="#00FFFF"/><rect x="14" y="7" width="1" height="1" fill="#9494B4"/><rect x="1" y="8" width="9" height="1" fill="#000000"/><rect x="10" y="8" width="1" height="1" fill="#FFFF00"/><rect x="11" y="8" width="2" height="1" fill="#00FFFF"/><rect x="13" y="8" width="1" height="1" fill="#9494B4"/><rect x="1" y="9" width="1" height="1" fill="#000000"/><rect x="2" y="9" width="3" height="1" fill="#FFFFFF"/><rect x="5" y="9" width="1" height="1" fill="#000000"/><rect x="6" y="9" width="3" height="1" fill="#FFFFFF"/><rect x="9" y="9" width="1" height="1" fill="#000000"/><rect x="10" y="9" width="1" height="1" fill="#FFFF00"/><rect x="11" y="9" width="1" height="1" fill="#00FFFF"/><rect x="12" y="9" width="1" height="1" fill="#9494B4"/><rect x="1" y="10" width="1" height="1" fill="#000000"/><rect x="2" y="10" width="3" height="1" fill="#FFFFFF"/><rect x="5" y="10" width="1" height="1" fill="#000000"/><rect x="6" y="10" width="3" height="1" fill="#FFFFFF"/><rect x="9" y="10" width="1" height="1" fill="#000000"/><rect x="10" y="10" width="1" height="1" fill="#FFFF00"/><rect x="11" y="10" width="1" height="1" fill="#9494B4"/><rect x="1" y="11" width="9" height="1" fill="#000000"/><rect x="1" y="12" width="1" height="1" fill="#000000"/><rect x="2" y="12" width="3" height="1" fill="#FFFFFF"/><rect x="5" y="12" width="1" height="1" fill="#000000"/><rect x="6" y="12" width="3" height="1" fill="#FFFFFF"/><rect x="9" y="12" width="1" height="1" fill="#000000"/><rect x="1" y="13" width="1" height="1" fill="#000000"/><rect x="2" y="13" width="3" height="1" fill="#FFFFFF"/><rect x="5" y="13" width="1" height="1" fill="#000000"/><rect x="6" y="13" width="3" height="1" fill="#FFFFFF"/><rect x="9" y="13" width="1" height="1" fill="#000000"/><rect x="1" y="14" width="9" height="1" fill="#000000"/></svg>
<svg style="position:absolute;left:396px;top:266px" width="14" height="11" shape-rendering="crispEdges"><rect x="4" y="0" width="6" height="1" fill="#000000"/><rect x="2" y="1" width="2" height="1" fill="#000000"/><rect x="4" y="1" width="6" height="1" fill="#FFFF00"/><rect x="10" y="1" width="2" height="1" fill="#000000"/><rect x="1" y="2" width="1" height="1" fill="#000000"/><rect x="2" y="2" width="1" height="1" fill="#00FF00"/><rect x="3" y="2" width="8" height="1" fill="#FFFF00"/><rect x="11" y="2" width="1" height="1" fill="#00FFFF"/><rect x="12" y="2" width="1" height="1" fill="#000000"/><rect x="1" y="3" width="1" height="1" fill="#000000"/><rect x="2" y="3" width="2" height="1" fill="#00FF00"/><rect x="4" y="3" width="1" height="1" fill="#FFFF00"/><rect x="5" y="3" width="4" height="1" fill="#000000"/><rect x="9" y="3" width="1" height="1" fill="#FFFF00"/><rect x="10" y="3" width="2" height="1" fill="#00FFFF"/><rect x="12" y="3" width="1" height="1" fill="#000000"/><rect x="0" y="4" width="1" height="1" fill="#000000"/><rect x="1" y="4" width="3" height="1" fill="#00FF00"/><rect x="4" y="4" width="1" height="1" fill="#000000"/><rect x="5" y="4" width="4" height="1" fill="#FFFFFF"/><rect x="9" y="4" width="1" height="1" fill="#000000"/><rect x="10" y="4" width="3" height="1" fill="#00FFFF"/><rect x="13" y="4" width="1" height="1" fill="#000000"/><rect x="0" y="5" width="1" height="1" fill="#000000"/><rect x="1" y="5" width="3" height="1" fill="#00FF00"/><rect x="4" y="5" width="1" height="1" fill="#000000"/><rect x="5" y="5" width="4" height="1" fill="#FFFFFF"/><rect x="9" y="5" width="1" height="1" fill="#000000"/><rect x="10" y="5" width="3" height="1" fill="#00FFFF"/><rect x="13" y="5" width="1" height="1" fill="#000000"/><rect x="0" y="6" width="1" height="1" fill="#000000"/><rect x="1" y="6" width="3" height="1" fill="#00FF00"/><rect x="4" y="6" width="1" height="1" fill="#000000"/><rect x="5" y="6" width="4" height="1" fill="#FFFFFF"/><rect x="9" y="6" width="1" height="1" fill="#000000"/><rect x="10" y="6" width="3" height="1" fill="#00FFFF"/><rect x="13" y="6" width="1" height="1" fill="#000000"/><rect x="1" y="7" width="1" height="1" fill="#000000"/><rect x="2" y="7" width="2" height="1" fill="#00FF00"/><rect x="4" y="7" width="1" height="1" fill="#FFFF00"/><rect x="5" y="7" width="4" height="1" fill="#000000"/><rect x="9" y="7" width="1" height="1" fill="#FFFF00"/><rect x="10" y="7" width="2" height="1" fill="#00FFFF"/><rect x="12" y="7" width="1" height="1" fill="#000000"/><rect x="1" y="8" width="1" height="1" fill="#000000"/><rect x="2" y="8" width="1" height="1" fill="#00FF00"/><rect x="3" y="8" width="8" height="1" fill="#FFFF00"/><rect x="11" y="8" width="1" height="1" fill="#00FFFF"/><rect x="12" y="8" width="1" height="1" fill="#000000"/><rect x="2" y="9" width="2" height="1" fill="#000000"/><rect x="4" y="9" width="6" height="1" fill="#FFFF00"/><rect x="10" y="9" width="2" height="1" fill="#000000"/><rect x="4" y="10" width="6" height="1" fill="#000000"/></svg>
<span class="m" style="left:420px;top:265px;color:#000">&lt;0&gt;</span>
<svg style="position:absolute;left:396px;top:282px" width="14" height="11" shape-rendering="crispEdges"><rect x="4" y="0" width="6" height="1" fill="#000000"/><rect x="2" y="1" width="2" height="1" fill="#000000"/><rect x="4" y="1" width="6" height="1" fill="#FFFF00"/><rect x="10" y="1" width="2" height="1" fill="#000000"/><rect x="1" y="2" width="1" height="1" fill="#000000"/><rect x="2" y="2" width="1" height="1" fill="#00FF00"/><rect x="3" y="2" width="8" height="1" fill="#FFFF00"/><rect x="11" y="2" width="1" height="1" fill="#00FFFF"/><rect x="12" y="2" width="1" height="1" fill="#000000"/><rect x="1" y="3" width="1" height="1" fill="#000000"/><rect x="2" y="3" width="2" height="1" fill="#00FF00"/><rect x="4" y="3" width="1" height="1" fill="#FFFF00"/><rect x="5" y="3" width="4" height="1" fill="#000000"/><rect x="9" y="3" width="1" height="1" fill="#FFFF00"/><rect x="10" y="3" width="2" height="1" fill="#00FFFF"/><rect x="12" y="3" width="1" height="1" fill="#000000"/><rect x="0" y="4" width="1" height="1" fill="#000000"/><rect x="1" y="4" width="3" height="1" fill="#00FF00"/><rect x="4" y="4" width="1" height="1" fill="#000000"/><rect x="5" y="4" width="4" height="1" fill="#FFFFFF"/><rect x="9" y="4" width="1" height="1" fill="#000000"/><rect x="10" y="4" width="3" height="1" fill="#00FFFF"/><rect x="13" y="4" width="1" height="1" fill="#000000"/><rect x="0" y="5" width="1" height="1" fill="#000000"/><rect x="1" y="5" width="3" height="1" fill="#00FF00"/><rect x="4" y="5" width="1" height="1" fill="#000000"/><rect x="5" y="5" width="4" height="1" fill="#FFFFFF"/><rect x="9" y="5" width="1" height="1" fill="#000000"/><rect x="10" y="5" width="3" height="1" fill="#00FFFF"/><rect x="13" y="5" width="1" height="1" fill="#000000"/><rect x="0" y="6" width="1" height="1" fill="#000000"/><rect x="1" y="6" width="3" height="1" fill="#00FF00"/><rect x="4" y="6" width="1" height="1" fill="#000000"/><rect x="5" y="6" width="4" height="1" fill="#FFFFFF"/><rect x="9" y="6" width="1" height="1" fill="#000000"/><rect x="10" y="6" width="3" height="1" fill="#00FFFF"/><rect x="13" y="6" width="1" height="1" fill="#000000"/><rect x="1" y="7" width="1" height="1" fill="#000000"/><rect x="2" y="7" width="2" height="1" fill="#00FF00"/><rect x="4" y="7" width="1" height="1" fill="#FFFF00"/><rect x="5" y="7" width="4" height="1" fill="#000000"/><rect x="9" y="7" width="1" height="1" fill="#FFFF00"/><rect x="10" y="7" width="2" height="1" fill="#00FFFF"/><rect x="12" y="7" width="1" height="1" fill="#000000"/><rect x="1" y="8" width="1" height="1" fill="#000000"/><rect x="2" y="8" width="1" height="1" fill="#00FF00"/><rect x="3" y="8" width="8" height="1" fill="#FFFF00"/><rect x="11" y="8" width="1" height="1" fill="#00FFFF"/><rect x="12" y="8" width="1" height="1" fill="#000000"/><rect x="2" y="9" width="2" height="1" fill="#000000"/><rect x="4" y="9" width="6" height="1" fill="#FFFF00"/><rect x="10" y="9" width="2" height="1" fill="#000000"/><rect x="4" y="10" width="6" height="1" fill="#000000"/></svg>
<span class="m" style="left:420px;top:281px;color:#000">CL_BOR_METHOD&lt;1&gt;</span>
<div style="left:395px;top:296px;width:184px;height:15px;background:#D6D6D6;"></div>
<span class="m" style="left:396px;top:297px;color:#000">Schedule</span>
<svg style="position:absolute;left:394px;top:312px" width="17" height="15" shape-rendering="crispEdges"><rect x="2" y="0" width="14" height="1" fill="#000000"/><rect x="2" y="1" width="1" height="1" fill="#000000"/><rect x="3" y="1" width="3" height="1" fill="#FFFFFF"/><rect x="6" y="1" width="1" height="1" fill="#000000"/><rect x="7" y="1" width="8" height="1" fill="#FFFF00"/><rect x="15" y="1" width="1" height="1" fill="#000000"/><rect x="16" y="1" width="1" height="1" fill="#848284"/><rect x="2" y="2" width="1" height="1" fill="#000000"/><rect x="3" y="2" width="1" height="1" fill="#FFFFFF"/><rect x="4" y="2" width="2" height="1" fill="#848284"/><rect x="6" y="2" width="1" height="1" fill="#000000"/><rect x="7" y="2" width="1" height="1" fill="#FFFF00"/><rect x="8" y="2" width="6" height="1" fill="#CCCC00"/><rect x="14" y="2" width="1" height="1" fill="#FFFF00"/><rect x="15" y="2" width="1" height="1" fill="#000000"/><rect x="16" y="2" width="1" height="1" fill="#848284"/><rect x="2" y="3" width="1" height="1" fill="#000000"/><rect x="3" y="3" width="1" height="1" fill="#FFFFFF"/><rect x="4" y="3" width="2" height="1" fill="#848284"/><rect x="6" y="3" width="1" height="1" fill="#000000"/><rect x="7" y="3" width="1" height="1" fill="#FFFF00"/><rect x="8" y="3" width="1" height="1" fill="#CCCC00"/><rect x="9" y="3" width="4" height="1" fill="#FFFF00"/><rect x="13" y="3" width="1" height="1" fill="#CCCC00"/><rect x="14" y="3" width="1" height="1" fill="#FFFF00"/><rect x="15" y="3" width="1" height="1" fill="#000000"/><rect x="16" y="3" width="1" height="1" fill="#848284"/><rect x="2" y="4" width="1" height="1" fill="#000000"/><rect x="3" y="4" width="1" height="1" fill="#FFFFFF"/><rect x="4" y="4" width="2" height="1" fill="#848284"/><rect x="6" y="4" width="1" height="1" fill="#000000"/><rect x="7" y="4" width="1" height="1" fill="#FFFF00"/><rect x="8" y="4" width="1" height="1" fill="#CCCC00"/><rect x="9" y="4" width="4" height="1" fill="#000000"/><rect x="13" y="4" width="1" height="1" fill="#CCCC00"/><rect x="14" y="4" width="1" height="1" fill="#FFFF00"/><rect x="15" y="4" width="1" height="1" fill="#000000"/><rect x="16" y="4" width="1" height="1" fill="#848284"/><rect x="2" y="5" width="1" height="1" fill="#000000"/><rect x="3" y="5" width="1" height="1" fill="#FFFFFF"/><rect x="4" y="5" width="2" height="1" fill="#848284"/><rect x="6" y="5" width="1" height="1" fill="#FFFFFF"/><rect x="7" y="5" width="1" height="1" fill="#000000"/><rect x="8" y="5" width="5" height="1" fill="#FFFFFF"/><rect x="13" y="5" width="1" height="1" fill="#000000"/><rect x="14" y="5" width="1" height="1" fill="#FFFF00"/><rect x="15" y="5" width="1" height="1" fill="#000000"/><rect x="16" y="5" width="1" height="1" fill="#848284"/><rect x="2" y="6" width="1" height="1" fill="#000000"/><rect x="3" y="6" width="1" height="1" fill="#FFFFFF"/><rect x="4" y="6" width="3" height="1" fill="#848284"/><rect x="7" y="6" width="1" height="1" fill="#FFFFFF"/><rect x="8" y="6" width="5" height="1" fill="#848284"/><rect x="13" y="6" width="1" height="1" fill="#000000"/><rect x="14" y="6" width="1" height="1" fill="#FFFF00"/><rect x="15" y="6" width="1" height="1" fill="#000000"/><rect x="16" y="6" width="1" height="1" fill="#848284"/><rect x="2" y="7" width="1" height="1" fill="#000000"/><rect x="3" y="7" width="1" height="1" fill="#FFFFFF"/><rect x="4" y="7" width="9" height="1" fill="#848284"/><rect x="13" y="7" width="1" height="1" fill="#000000"/><rect x="14" y="7" width="1" height="1" fill="#FFFF00"/><rect x="15" y="7" width="1" height="1" fill="#000000"/><rect x="16" y="7" width="1" height="1" fill="#848284"/><rect x="2" y="8" width="1" height="1" fill="#000000"/><rect x="3" y="8" width="1" height="1" fill="#FFFFFF"/><rect x="4" y="8" width="2" height="1" fill="#848284"/><rect x="6" y="8" width="2" height="1" fill="#000000"/><rect x="8" y="8" width="5" height="1" fill="#848284"/><rect x="13" y="8" width="1" height="1" fill="#000000"/><rect x="14" y="8" width="1" height="1" fill="#FFFF00"/><rect x="15" y="8" width="1" height="1" fill="#000000"/><rect x="16" y="8" width="1" height="1" fill="#848284"/><rect x="2" y="9" width="1" height="1" fill="#000000"/><rect x="3" y="9" width="1" height="1" fill="#FFFFFF"/><rect x="4" y="9" width="2" height="1" fill="#848284"/><rect x="6" y="9" width="1" height="1" fill="#000000"/><rect x="7" y="9" width="1" height="1" fill="#FFFF00"/><rect x="8" y="9" width="1" height="1" fill="#CCCC00"/><rect x="9" y="9" width="4" height="1" fill="#000000"/><rect x="13" y="9" width="1" height="1" fill="#CCCC00"/><rect x="14" y="9" width="1" height="1" fill="#FFFF00"/><rect x="15" y="9" width="1" height="1" fill="#000000"/><rect x="16" y="9" width="1" height="1" fill="#848284"/><rect x="2" y="10" width="1" height="1" fill="#000000"/><rect x="3" y="10" width="1" height="1" fill="#FFFFFF"/><rect x="4" y="10" width="2" height="1" fill="#848284"/><rect x="6" y="10" width="1" height="1" fill="#000000"/><rect x="7" y="10" width="1" height="1" fill="#FFFF00"/><rect x="8" y="10" width="1" height="1" fill="#CCCC00"/><rect x="9" y="10" width="4" height="1" fill="#FFFF00"/><rect x="13" y="10" width="1" height="1" fill="#CCCC00"/><rect x="14" y="10" width="1" height="1" fill="#FFFF00"/><rect x="15" y="10" width="1" height="1" fill="#000000"/><rect x="16" y="10" width="1" height="1" fill="#848284"/><rect x="2" y="11" width="1" height="1" fill="#000000"/><rect x="3" y="11" width="1" height="1" fill="#FFFFFF"/><rect x="4" y="11" width="2" height="1" fill="#848284"/><rect x="6" y="11" width="1" height="1" fill="#000000"/><rect x="7" y="11" width="1" height="1" fill="#FFFF00"/><rect x="8" y="11" width="6" height="1" fill="#CCCC00"/><rect x="14" y="11" width="1" height="1" fill="#FFFF00"/><rect x="15" y="11" width="1" height="1" fill="#000000"/><rect x="16" y="11" width="1" height="1" fill="#848284"/><rect x="2" y="12" width="1" height="1" fill="#000000"/><rect x="3" y="12" width="1" height="1" fill="#FFFFFF"/><rect x="4" y="12" width="2" height="1" fill="#848284"/><rect x="6" y="12" width="1" height="1" fill="#000000"/><rect x="7" y="12" width="8" height="1" fill="#FFFF00"/><rect x="15" y="12" width="1" height="1" fill="#000000"/><rect x="16" y="12" width="1" height="1" fill="#848284"/><rect x="2" y="13" width="14" height="1" fill="#000000"/><rect x="16" y="13" width="1" height="1" fill="#848284"/><rect x="3" y="14" width="14" height="1" fill="#848284"/></svg>
<span class="m" style="left:420px;top:313px;color:#000">Personal appointment</span>
<div style="left:31px;top:349px;width:20px;height:1px;background:#000000;"></div>
<div style="left:51px;top:344px;width:16px;height:15px;background:#ADE6E6;"></div>
<svg style="position:absolute;left:50px;top:347px" width="12" height="7" shape-rendering="crispEdges"><rect x="3" y="0" width="4" height="1" fill="#000000"/><rect x="2" y="1" width="1" height="1" fill="#000000"/><rect x="6" y="1" width="6" height="1" fill="#000000"/><rect x="2" y="2" width="1" height="1" fill="#000000"/><rect x="11" y="2" width="1" height="1" fill="#000000"/><rect x="2" y="3" width="1" height="1" fill="#000000"/><rect x="5" y="3" width="4" height="1" fill="#000000"/><rect x="11" y="3" width="1" height="1" fill="#000000"/><rect x="2" y="4" width="1" height="1" fill="#000000"/><rect x="11" y="4" width="1" height="1" fill="#000000"/><rect x="2" y="5" width="1" height="1" fill="#000000"/><rect x="11" y="5" width="1" height="1" fill="#000000"/><rect x="2" y="6" width="10" height="1" fill="#000000"/></svg>
<div style="left:75px;top:344px;width:160px;height:15px;background:#ADE6E6;"></div>
<span class="m" style="left:76px;top:345px;color:#000">Methods</span>
<div style="left:63px;top:359px;width:1px;height:39px;background:#000000;"></div>
<div style="left:63px;top:381px;width:44px;height:1px;background:#000000;"></div>
<div style="left:123px;top:376px;width:240px;height:15px;background:#ADE6E6;"></div>
<span class="m" style="left:124px;top:377px;color:#000">FIND</span>
<svg style="position:absolute;left:106px;top:376px" width="17" height="15" shape-rendering="crispEdges"><rect x="2" y="0" width="14" height="1" fill="#0000FF"/><rect x="1" y="1" width="1" height="1" fill="#0000FF"/><rect x="16" y="1" width="1" height="1" fill="#0000FF"/><rect x="1" y="2" width="1" height="1" fill="#0000FF"/><rect x="6" y="2" width="5" height="1" fill="#9494B4"/><rect x="16" y="2" width="1" height="1" fill="#0000FF"/><rect x="1" y="3" width="1" height="1" fill="#0000FF"/><rect x="4" y="3" width="2" height="1" fill="#9494B4"/><rect x="6" y="3" width="5" height="1" fill="#FFFF00"/><rect x="11" y="3" width="3" height="1" fill="#9494B4"/><rect x="16" y="3" width="1" height="1" fill="#0000FF"/><rect x="1" y="4" width="1" height="1" fill="#0000FF"/><rect x="3" y="4" width="1" height="1" fill="#9494B4"/><rect x="4" y="4" width="1" height="1" fill="#00FF00"/><rect x="5" y="4" width="6" height="1" fill="#FFFF00"/><rect x="11" y="4" width="2" height="1" fill="#00FFFF"/><rect x="13" y="4" width="1" height="1" fill="#9494B4"/><rect x="16" y="4" width="1" height="1" fill="#0000FF"/><rect x="1" y="5" width="1" height="1" fill="#0000FF"/><rect x="3" y="5" width="3" height="1" fill="#00FF00"/><rect x="6" y="5" width="1" height="1" fill="#FFFF00"/><rect x="7" y="5" width="3" height="1" fill="#9494B4"/><rect x="10" y="5" width="1" height="1" fill="#FFFF00"/><rect x="11" y="5" width="2" height="1" fill="#00FFFF"/><rect x="13" y="5" width="1" height="1" fill="#9494B4"/><rect x="16" y="5" width="1" height="1" fill="#0000FF"/><rect x="1" y="6" width="1" height="1" fill="#0000FF"/><rect x="3" y="6" width="3" height="1" fill="#00FF00"/><rect x="6" y="6" width="1" height="1" fill="#9494B4"/><rect x="7" y="6" width="1" height="1" fill="#FFFFFF"/><rect x="8" y="6" width="6" height="1" fill="#000000"/><rect x="16" y="6" width="1" height="1" fill="#0000FF"/><rect x="1" y="7" width="1" height="1" fill="#0000FF"/><rect x="3" y="7" width="3" height="1" fill="#00FF00"/><rect x="6" y="7" width="1" height="1" fill="#9494B4"/><rect x="7" y="7" width="1" height="1" fill="#FFFFFF"/><rect x="8" y="7" width="1" height="1" fill="#000000"/><rect x="9" y="7" width="4" height="1" fill="#0000FF"/><rect x="13" y="7" width="1" height="1" fill="#000000"/><rect x="16" y="7" width="1" height="1" fill="#0000FF"/><rect x="1" y="8" width="1" height="1" fill="#0000FF"/><rect x="3" y="8" width="1" height="1" fill="#9494B4"/><rect x="4" y="8" width="2" height="1" fill="#00FF00"/><rect x="6" y="8" width="1" height="1" fill="#FFFF00"/><rect x="7" y="8" width="1" height="1" fill="#FFFFFF"/><rect x="8" y="8" width="1" height="1" fill="#000000"/><rect x="9" y="8" width="3" height="1" fill="#0000FF"/><rect x="12" y="8" width="1" height="1" fill="#000000"/><rect x="16" y="8" width="1" height="1" fill="#0000FF"/><rect x="1" y="9" width="1" height="1" fill="#0000FF"/><rect x="4" y="9" width="1" height="1" fill="#9494B4"/><rect x="5" y="9" width="3" height="1" fill="#FFFF00"/><rect x="8" y="9" width="1" height="1" fill="#000000"/><rect x="9" y="9" width="4" height="1" fill="#0000FF"/><rect x="13" y="9" width="1" height="1" fill="#000000"/><rect x="16" y="9" width="1" height="1" fill="#0000FF"/><rect x="1" y="10" width="1" height="1" fill="#0000FF"/><rect x="5" y="10" width="1" height="1" fill="#9494B4"/><rect x="6" y="10" width="2" height="1" fill="#FFFF00"/><rect x="8" y="10" width="1" height="1" fill="#000000"/><rect x="9" y="10" width="1" height="1" fill="#0000FF"/><rect x="10" y="10" width="1" height="1" fill="#000000"/><rect x="11" y="10" width="3" height="1" fill="#0000FF"/><rect x="14" y="10" width="1" height="1" fill="#000000"/><rect x="1" y="11" width="1" height="1" fill="#0000FF"/><rect x="6" y="11" width="2" height="1" fill="#9494B4"/><rect x="8" y="11" width="2" height="1" fill="#000000"/><rect x="11" y="11" width="1" height="1" fill="#000000"/><rect x="12" y="11" width="3" height="1" fill="#0000FF"/><rect x="15" y="11" width="1" height="1" fill="#000000"/><rect x="1" y="12" width="1" height="1" fill="#0000FF"/><rect x="8" y="12" width="1" height="1" fill="#000000"/><rect x="12" y="12" width="1" height="1" fill="#000000"/><rect x="13" y="12" width="3" height="1" fill="#0000FF"/><rect x="16" y="12" width="1" height="1" fill="#000000"/><rect x="1" y="13" width="1" height="1" fill="#0000FF"/><rect x="13" y="13" width="1" height="1" fill="#000000"/><rect x="14" y="13" width="2" height="1" fill="#0000FF"/><rect x="16" y="13" width="1" height="1" fill="#000000"/><rect x="2" y="14" width="10" height="1" fill="#0000FF"/><rect x="14" y="14" width="2" height="1" fill="#000000"/></svg>
<svg style="position:absolute;left:369px;top:375px" width="20" height="16" shape-rendering="crispEdges"><rect x="11" y="1" width="5" height="1" fill="#000000"/><rect x="10" y="2" width="1" height="1" fill="#000000"/><rect x="11" y="2" width="5" height="1" fill="#FFFFFF"/><rect x="16" y="2" width="1" height="1" fill="#000000"/><rect x="9" y="3" width="1" height="1" fill="#000000"/><rect x="10" y="3" width="3" height="1" fill="#FFFFFF"/><rect x="13" y="3" width="1" height="1" fill="#000000"/><rect x="14" y="3" width="3" height="1" fill="#FFFFFF"/><rect x="17" y="3" width="1" height="1" fill="#000000"/><rect x="9" y="4" width="1" height="1" fill="#000000"/><rect x="10" y="4" width="3" height="1" fill="#FFFFFF"/><rect x="13" y="4" width="1" height="1" fill="#000000"/><rect x="14" y="4" width="3" height="1" fill="#FFFFFF"/><rect x="17" y="4" width="1" height="1" fill="#000000"/><rect x="9" y="5" width="1" height="1" fill="#000000"/><rect x="10" y="5" width="3" height="1" fill="#FFFFFF"/><rect x="13" y="5" width="3" height="1" fill="#000000"/><rect x="16" y="5" width="1" height="1" fill="#FFFFFF"/><rect x="17" y="5" width="1" height="1" fill="#000000"/><rect x="9" y="6" width="1" height="1" fill="#000000"/><rect x="10" y="6" width="1" height="1" fill="#FFFFFF"/><rect x="11" y="6" width="2" height="1" fill="#000000"/><rect x="13" y="6" width="4" height="1" fill="#FFFFFF"/><rect x="17" y="6" width="1" height="1" fill="#000000"/><rect x="2" y="7" width="3" height="1" fill="#000000"/><rect x="9" y="7" width="2" height="1" fill="#000000"/><rect x="11" y="7" width="2" height="1" fill="#00FF00"/><rect x="13" y="7" width="1" height="1" fill="#000000"/><rect x="14" y="7" width="3" height="1" fill="#FFFFFF"/><rect x="17" y="7" width="1" height="1" fill="#000000"/><rect x="2" y="8" width="1" height="1" fill="#000000"/><rect x="3" y="8" width="2" height="1" fill="#00FF00"/><rect x="5" y="8" width="1" height="1" fill="#000000"/><rect x="9" y="8" width="1" height="1" fill="#000000"/><rect x="10" y="8" width="3" height="1" fill="#00FF00"/><rect x="13" y="8" width="1" height="1" fill="#000000"/><rect x="14" y="8" width="2" height="1" fill="#FFFFFF"/><rect x="16" y="8" width="1" height="1" fill="#000000"/><rect x="2" y="9" width="1" height="1" fill="#000000"/><rect x="3" y="9" width="2" height="1" fill="#00FF00"/><rect x="5" y="9" width="1" height="1" fill="#000000"/><rect x="8" y="9" width="1" height="1" fill="#000000"/><rect x="9" y="9" width="3" height="1" fill="#00FF00"/><rect x="12" y="9" width="5" height="1" fill="#000000"/><rect x="2" y="10" width="1" height="1" fill="#000000"/><rect x="3" y="10" width="2" height="1" fill="#00FF00"/><rect x="5" y="10" width="1" height="1" fill="#000000"/><rect x="7" y="10" width="1" height="1" fill="#000000"/><rect x="8" y="10" width="3" height="1" fill="#00FF00"/><rect x="11" y="10" width="1" height="1" fill="#000000"/><rect x="2" y="11" width="1" height="1" fill="#000000"/><rect x="3" y="11" width="2" height="1" fill="#00FF00"/><rect x="5" y="11" width="2" height="1" fill="#000000"/><rect x="7" y="11" width="3" height="1" fill="#00FF00"/><rect x="10" y="11" width="1" height="1" fill="#000000"/><rect x="2" y="12" width="1" height="1" fill="#000000"/><rect x="3" y="12" width="6" height="1" fill="#00FF00"/><rect x="9" y="12" width="1" height="1" fill="#000000"/><rect x="2" y="13" width="1" height="1" fill="#000000"/><rect x="3" y="13" width="5" height="1" fill="#00FF00"/><rect x="8" y="13" width="1" height="1" fill="#000000"/><rect x="2" y="14" width="2" height="1" fill="#000000"/><rect x="4" y="14" width="3" height="1" fill="#00FF00"/><rect x="7" y="14" width="1" height="1" fill="#000000"/><rect x="3" y="15" width="4" height="1" fill="#000000"/></svg>
<div style="left:63px;top:397px;width:44px;height:1px;background:#000000;"></div>
<div style="left:123px;top:392px;width:240px;height:15px;background:#ADE6E6;"></div>
<span class="m" style="left:124px;top:393px;color:#000">CHANGE</span>
<svg style="position:absolute;left:106px;top:392px" width="17" height="15" shape-rendering="crispEdges"><rect x="11" y="0" width="6" height="1" fill="#FF0000"/><rect x="16" y="1" width="1" height="1" fill="#FF0000"/><rect x="6" y="2" width="5" height="1" fill="#9494B4"/><rect x="11" y="2" width="4" height="1" fill="#FF0000"/><rect x="16" y="2" width="1" height="1" fill="#FF0000"/><rect x="4" y="3" width="2" height="1" fill="#9494B4"/><rect x="6" y="3" width="5" height="1" fill="#FFFF00"/><rect x="14" y="3" width="1" height="1" fill="#FF0000"/><rect x="16" y="3" width="1" height="1" fill="#FF0000"/><rect x="3" y="4" width="1" height="1" fill="#9494B4"/><rect x="4" y="4" width="1" height="1" fill="#00FF00"/><rect x="5" y="4" width="6" height="1" fill="#FFFF00"/><rect x="11" y="4" width="2" height="1" fill="#00FFFF"/><rect x="13" y="4" width="1" height="1" fill="#9494B4"/><rect x="14" y="4" width="1" height="1" fill="#FF0000"/><rect x="16" y="4" width="1" height="1" fill="#FF0000"/><rect x="3" y="5" width="3" height="1" fill="#00FF00"/><rect x="6" y="5" width="1" height="1" fill="#FFFF00"/><rect x="7" y="5" width="3" height="1" fill="#9494B4"/><rect x="10" y="5" width="1" height="1" fill="#FFFF00"/><rect x="11" y="5" width="2" height="1" fill="#00FFFF"/><rect x="13" y="5" width="1" height="1" fill="#9494B4"/><rect x="14" y="5" width="1" height="1" fill="#FF0000"/><rect x="16" y="5" width="1" height="1" fill="#FF0000"/><rect x="3" y="6" width="3" height="1" fill="#00FF00"/><rect x="6" y="6" width="1" height="1" fill="#9494B4"/><rect x="7" y="6" width="1" height="1" fill="#FFFFFF"/><rect x="8" y="6" width="6" height="1" fill="#000000"/><rect x="3" y="7" width="3" height="1" fill="#00FF00"/><rect x="6" y="7" width="1" height="1" fill="#9494B4"/><rect x="7" y="7" width="1" height="1" fill="#FFFFFF"/><rect x="8" y="7" width="1" height="1" fill="#000000"/><rect x="9" y="7" width="4" height="1" fill="#0000FF"/><rect x="13" y="7" width="1" height="1" fill="#000000"/><rect x="3" y="8" width="1" height="1" fill="#9494B4"/><rect x="4" y="8" width="2" height="1" fill="#00FF00"/><rect x="6" y="8" width="1" height="1" fill="#FFFF00"/><rect x="7" y="8" width="1" height="1" fill="#FFFFFF"/><rect x="8" y="8" width="1" height="1" fill="#000000"/><rect x="9" y="8" width="3" height="1" fill="#0000FF"/><rect x="12" y="8" width="1" height="1" fill="#000000"/><rect x="4" y="9" width="1" height="1" fill="#9494B4"/><rect x="5" y="9" width="3" height="1" fill="#FFFF00"/><rect x="8" y="9" width="1" height="1" fill="#000000"/><rect x="9" y="9" width="4" height="1" fill="#0000FF"/><rect x="13" y="9" width="1" height="1" fill="#000000"/><rect x="5" y="10" width="1" height="1" fill="#9494B4"/><rect x="6" y="10" width="2" height="1" fill="#FFFF00"/><rect x="8" y="10" width="1" height="1" fill="#000000"/><rect x="9" y="10" width="1" height="1" fill="#0000FF"/><rect x="10" y="10" width="1" height="1" fill="#000000"/><rect x="11" y="10" width="3" height="1" fill="#0000FF"/><rect x="14" y="10" width="1" height="1" fill="#000000"/><rect x="6" y="11" width="2" height="1" fill="#9494B4"/><rect x="8" y="11" width="2" height="1" fill="#000000"/><rect x="11" y="11" width="1" height="1" fill="#000000"/><rect x="12" y="11" width="3" height="1" fill="#0000FF"/><rect x="15" y="11" width="1" height="1" fill="#000000"/><rect x="8" y="12" width="1" height="1" fill="#000000"/><rect x="12" y="12" width="1" height="1" fill="#000000"/><rect x="13" y="12" width="3" height="1" fill="#0000FF"/><rect x="16" y="12" width="1" height="1" fill="#000000"/><rect x="13" y="13" width="1" height="1" fill="#000000"/><rect x="14" y="13" width="2" height="1" fill="#0000FF"/><rect x="16" y="13" width="1" height="1" fill="#000000"/><rect x="14" y="14" width="2" height="1" fill="#000000"/></svg>
<svg style="position:absolute;left:369px;top:391px" width="20" height="16" shape-rendering="crispEdges"><rect x="11" y="1" width="5" height="1" fill="#000000"/><rect x="10" y="2" width="1" height="1" fill="#000000"/><rect x="11" y="2" width="5" height="1" fill="#FFFFFF"/><rect x="16" y="2" width="1" height="1" fill="#000000"/><rect x="9" y="3" width="1" height="1" fill="#000000"/><rect x="10" y="3" width="3" height="1" fill="#FFFFFF"/><rect x="13" y="3" width="1" height="1" fill="#000000"/><rect x="14" y="3" width="3" height="1" fill="#FFFFFF"/><rect x="17" y="3" width="1" height="1" fill="#000000"/><rect x="9" y="4" width="1" height="1" fill="#000000"/><rect x="10" y="4" width="3" height="1" fill="#FFFFFF"/><rect x="13" y="4" width="1" height="1" fill="#000000"/><rect x="14" y="4" width="3" height="1" fill="#FFFFFF"/><rect x="17" y="4" width="1" height="1" fill="#000000"/><rect x="9" y="5" width="1" height="1" fill="#000000"/><rect x="10" y="5" width="3" height="1" fill="#FFFFFF"/><rect x="13" y="5" width="3" height="1" fill="#000000"/><rect x="16" y="5" width="1" height="1" fill="#FFFFFF"/><rect x="17" y="5" width="1" height="1" fill="#000000"/><rect x="9" y="6" width="1" height="1" fill="#000000"/><rect x="10" y="6" width="1" height="1" fill="#FFFFFF"/><rect x="11" y="6" width="2" height="1" fill="#000000"/><rect x="13" y="6" width="4" height="1" fill="#FFFFFF"/><rect x="17" y="6" width="1" height="1" fill="#000000"/><rect x="2" y="7" width="3" height="1" fill="#000000"/><rect x="9" y="7" width="2" height="1" fill="#000000"/><rect x="11" y="7" width="2" height="1" fill="#00FF00"/><rect x="13" y="7" width="1" height="1" fill="#000000"/><rect x="14" y="7" width="3" height="1" fill="#FFFFFF"/><rect x="17" y="7" width="1" height="1" fill="#000000"/><rect x="2" y="8" width="1" height="1" fill="#000000"/><rect x="3" y="8" width="2" height="1" fill="#00FF00"/><rect x="5" y="8" width="1" height="1" fill="#000000"/><rect x="9" y="8" width="1" height="1" fill="#000000"/><rect x="10" y="8" width="3" height="1" fill="#00FF00"/><rect x="13" y="8" width="1" height="1" fill="#000000"/><rect x="14" y="8" width="2" height="1" fill="#FFFFFF"/><rect x="16" y="8" width="1" height="1" fill="#000000"/><rect x="2" y="9" width="1" height="1" fill="#000000"/><rect x="3" y="9" width="2" height="1" fill="#00FF00"/><rect x="5" y="9" width="1" height="1" fill="#000000"/><rect x="8" y="9" width="1" height="1" fill="#000000"/><rect x="9" y="9" width="3" height="1" fill="#00FF00"/><rect x="12" y="9" width="5" height="1" fill="#000000"/><rect x="2" y="10" width="1" height="1" fill="#000000"/><rect x="3" y="10" width="2" height="1" fill="#00FF00"/><rect x="5" y="10" width="1" height="1" fill="#000000"/><rect x="7" y="10" width="1" height="1" fill="#000000"/><rect x="8" y="10" width="3" height="1" fill="#00FF00"/><rect x="11" y="10" width="1" height="1" fill="#000000"/><rect x="2" y="11" width="1" height="1" fill="#000000"/><rect x="3" y="11" width="2" height="1" fill="#00FF00"/><rect x="5" y="11" width="2" height="1" fill="#000000"/><rect x="7" y="11" width="3" height="1" fill="#00FF00"/><rect x="10" y="11" width="1" height="1" fill="#000000"/><rect x="2" y="12" width="1" height="1" fill="#000000"/><rect x="3" y="12" width="6" height="1" fill="#00FF00"/><rect x="9" y="12" width="1" height="1" fill="#000000"/><rect x="2" y="13" width="1" height="1" fill="#000000"/><rect x="3" y="13" width="5" height="1" fill="#00FF00"/><rect x="8" y="13" width="1" height="1" fill="#000000"/><rect x="2" y="14" width="2" height="1" fill="#000000"/><rect x="4" y="14" width="3" height="1" fill="#00FF00"/><rect x="7" y="14" width="1" height="1" fill="#000000"/><rect x="3" y="15" width="4" height="1" fill="#000000"/></svg>
<div style="left:31px;top:429px;width:20px;height:1px;background:#000000;"></div>
<div style="left:51px;top:424px;width:16px;height:15px;background:#ADE6E6;"></div>
<svg style="position:absolute;left:50px;top:427px" width="12" height="7" shape-rendering="crispEdges"><rect x="3" y="0" width="4" height="1" fill="#000000"/><rect x="2" y="1" width="1" height="1" fill="#000000"/><rect x="6" y="1" width="6" height="1" fill="#000000"/><rect x="2" y="2" width="1" height="1" fill="#000000"/><rect x="11" y="2" width="1" height="1" fill="#000000"/><rect x="2" y="3" width="1" height="1" fill="#000000"/><rect x="5" y="3" width="4" height="1" fill="#000000"/><rect x="11" y="3" width="1" height="1" fill="#000000"/><rect x="2" y="4" width="1" height="1" fill="#000000"/><rect x="11" y="4" width="1" height="1" fill="#000000"/><rect x="2" y="5" width="1" height="1" fill="#000000"/><rect x="11" y="5" width="1" height="1" fill="#000000"/><rect x="2" y="6" width="10" height="1" fill="#000000"/></svg>
<div style="left:75px;top:424px;width:160px;height:15px;background:#ADE6E6;"></div>
<span class="m" style="left:76px;top:425px;color:#000">Events</span>
<div style="left:63px;top:439px;width:1px;height:39px;background:#000000;"></div>
<div style="left:63px;top:461px;width:44px;height:1px;background:#000000;"></div>
<div style="left:123px;top:456px;width:240px;height:15px;background:#ADE6E6;"></div>
<span class="m" style="left:124px;top:457px;color:#000">NIX</span>
<svg style="position:absolute;left:106px;top:455px" width="17" height="16" shape-rendering="crispEdges"><rect x="12" y="1" width="1" height="1" fill="#000000"/><rect x="10" y="2" width="1" height="1" fill="#000000"/><rect x="13" y="2" width="1" height="1" fill="#000000"/><rect x="3" y="3" width="5" height="1" fill="#000000"/><rect x="11" y="3" width="1" height="1" fill="#000000"/><rect x="14" y="3" width="1" height="1" fill="#000000"/><rect x="2" y="4" width="1" height="1" fill="#000000"/><rect x="3" y="4" width="5" height="1" fill="#FFFF00"/><rect x="8" y="4" width="2" height="1" fill="#000000"/><rect x="12" y="4" width="1" height="1" fill="#000000"/><rect x="14" y="4" width="1" height="1" fill="#000000"/><rect x="2" y="5" width="6" height="1" fill="#FFFF00"/><rect x="8" y="5" width="2" height="1" fill="#00FFFF"/><rect x="10" y="5" width="1" height="1" fill="#000000"/><rect x="12" y="5" width="1" height="1" fill="#000000"/><rect x="15" y="5" width="1" height="1" fill="#000000"/><rect x="2" y="6" width="1" height="1" fill="#00FF00"/><rect x="3" y="6" width="4" height="1" fill="#000000"/><rect x="7" y="6" width="1" height="1" fill="#FFFF00"/><rect x="8" y="6" width="3" height="1" fill="#00FFFF"/><rect x="11" y="6" width="1" height="1" fill="#000000"/><rect x="13" y="6" width="1" height="1" fill="#000000"/><rect x="15" y="6" width="1" height="1" fill="#000000"/><rect x="2" y="7" width="1" height="1" fill="#000000"/><rect x="3" y="7" width="4" height="1" fill="#FFFFFF"/><rect x="7" y="7" width="1" height="1" fill="#000000"/><rect x="8" y="7" width="3" height="1" fill="#00FFFF"/><rect x="11" y="7" width="1" height="1" fill="#000000"/><rect x="13" y="7" width="1" height="1" fill="#000000"/><rect x="15" y="7" width="1" height="1" fill="#000000"/><rect x="2" y="8" width="1" height="1" fill="#000000"/><rect x="3" y="8" width="4" height="1" fill="#FFFFFF"/><rect x="7" y="8" width="1" height="1" fill="#000000"/><rect x="8" y="8" width="3" height="1" fill="#00FFFF"/><rect x="11" y="8" width="1" height="1" fill="#000000"/><rect x="13" y="8" width="1" height="1" fill="#000000"/><rect x="15" y="8" width="1" height="1" fill="#000000"/><rect x="2" y="9" width="1" height="1" fill="#000000"/><rect x="3" y="9" width="4" height="1" fill="#FFFFFF"/><rect x="7" y="9" width="1" height="1" fill="#000000"/><rect x="8" y="9" width="3" height="1" fill="#00FFFF"/><rect x="11" y="9" width="1" height="1" fill="#000000"/><rect x="13" y="9" width="1" height="1" fill="#000000"/><rect x="15" y="9" width="1" height="1" fill="#000000"/><rect x="2" y="10" width="1" height="1" fill="#00FF00"/><rect x="3" y="10" width="4" height="1" fill="#000000"/><rect x="7" y="10" width="1" height="1" fill="#FFFF00"/><rect x="8" y="10" width="3" height="1" fill="#00FFFF"/><rect x="11" y="10" width="1" height="1" fill="#000000"/><rect x="13" y="10" width="1" height="1" fill="#000000"/><rect x="15" y="10" width="1" height="1" fill="#000000"/><rect x="2" y="11" width="6" height="1" fill="#FFFF00"/><rect x="8" y="11" width="2" height="1" fill="#00FFFF"/><rect x="10" y="11" width="1" height="1" fill="#000000"/><rect x="12" y="11" width="1" height="1" fill="#000000"/><rect x="15" y="11" width="1" height="1" fill="#000000"/><rect x="2" y="12" width="1" height="1" fill="#000000"/><rect x="3" y="12" width="5" height="1" fill="#FFFF00"/><rect x="8" y="12" width="2" height="1" fill="#000000"/><rect x="12" y="12" width="1" height="1" fill="#000000"/><rect x="14" y="12" width="1" height="1" fill="#000000"/><rect x="3" y="13" width="5" height="1" fill="#000000"/><rect x="11" y="13" width="1" height="1" fill="#000000"/><rect x="14" y="13" width="1" height="1" fill="#000000"/><rect x="10" y="14" width="1" height="1" fill="#000000"/><rect x="13" y="14" width="1" height="1" fill="#000000"/><rect x="12" y="15" width="1" height="1" fill="#000000"/></svg>
<div style="left:63px;top:477px;width:44px;height:1px;background:#000000;"></div>
<div style="left:123px;top:472px;width:240px;height:15px;background:#ADE6E6;"></div>
<span class="m" style="left:124px;top:473px;color:#000">CHANGED</span>
<svg style="position:absolute;left:106px;top:471px" width="17" height="16" shape-rendering="crispEdges"><rect x="12" y="1" width="1" height="1" fill="#000000"/><rect x="10" y="2" width="1" height="1" fill="#000000"/><rect x="13" y="2" width="1" height="1" fill="#000000"/><rect x="3" y="3" width="5" height="1" fill="#000000"/><rect x="11" y="3" width="1" height="1" fill="#000000"/><rect x="14" y="3" width="1" height="1" fill="#000000"/><rect x="2" y="4" width="1" height="1" fill="#000000"/><rect x="3" y="4" width="5" height="1" fill="#FFFF00"/><rect x="8" y="4" width="2" height="1" fill="#000000"/><rect x="12" y="4" width="1" height="1" fill="#000000"/><rect x="14" y="4" width="1" height="1" fill="#000000"/><rect x="2" y="5" width="6" height="1" fill="#FFFF00"/><rect x="8" y="5" width="2" height="1" fill="#00FFFF"/><rect x="10" y="5" width="1" height="1" fill="#000000"/><rect x="12" y="5" width="1" height="1" fill="#000000"/><rect x="15" y="5" width="1" height="1" fill="#000000"/><rect x="2" y="6" width="1" height="1" fill="#00FF00"/><rect x="3" y="6" width="4" height="1" fill="#000000"/><rect x="7" y="6" width="1" height="1" fill="#FFFF00"/><rect x="8" y="6" width="3" height="1" fill="#00FFFF"/><rect x="11" y="6" width="1" height="1" fill="#000000"/><rect x="13" y="6" width="1" height="1" fill="#000000"/><rect x="15" y="6" width="1" height="1" fill="#000000"/><rect x="2" y="7" width="1" height="1" fill="#000000"/><rect x="3" y="7" width="4" height="1" fill="#FFFFFF"/><rect x="7" y="7" width="1" height="1" fill="#000000"/><rect x="8" y="7" width="3" height="1" fill="#00FFFF"/><rect x="11" y="7" width="1" height="1" fill="#000000"/><rect x="13" y="7" width="1" height="1" fill="#000000"/><rect x="15" y="7" width="1" height="1" fill="#000000"/><rect x="2" y="8" width="1" height="1" fill="#000000"/><rect x="3" y="8" width="4" height="1" fill="#FFFFFF"/><rect x="7" y="8" width="1" height="1" fill="#000000"/><rect x="8" y="8" width="3" height="1" fill="#00FFFF"/><rect x="11" y="8" width="1" height="1" fill="#000000"/><rect x="13" y="8" width="1" height="1" fill="#000000"/><rect x="15" y="8" width="1" height="1" fill="#000000"/><rect x="2" y="9" width="1" height="1" fill="#000000"/><rect x="3" y="9" width="4" height="1" fill="#FFFFFF"/><rect x="7" y="9" width="1" height="1" fill="#000000"/><rect x="8" y="9" width="3" height="1" fill="#00FFFF"/><rect x="11" y="9" width="1" height="1" fill="#000000"/><rect x="13" y="9" width="1" height="1" fill="#000000"/><rect x="15" y="9" width="1" height="1" fill="#000000"/><rect x="2" y="10" width="1" height="1" fill="#00FF00"/><rect x="3" y="10" width="4" height="1" fill="#000000"/><rect x="7" y="10" width="1" height="1" fill="#FFFF00"/><rect x="8" y="10" width="3" height="1" fill="#00FFFF"/><rect x="11" y="10" width="1" height="1" fill="#000000"/><rect x="13" y="10" width="1" height="1" fill="#000000"/><rect x="15" y="10" width="1" height="1" fill="#000000"/><rect x="2" y="11" width="6" height="1" fill="#FFFF00"/><rect x="8" y="11" width="2" height="1" fill="#00FFFF"/><rect x="10" y="11" width="1" height="1" fill="#000000"/><rect x="12" y="11" width="1" height="1" fill="#000000"/><rect x="15" y="11" width="1" height="1" fill="#000000"/><rect x="2" y="12" width="1" height="1" fill="#000000"/><rect x="3" y="12" width="5" height="1" fill="#FFFF00"/><rect x="8" y="12" width="2" height="1" fill="#000000"/><rect x="12" y="12" width="1" height="1" fill="#000000"/><rect x="14" y="12" width="1" height="1" fill="#000000"/><rect x="3" y="13" width="5" height="1" fill="#000000"/><rect x="11" y="13" width="1" height="1" fill="#000000"/><rect x="14" y="13" width="1" height="1" fill="#000000"/><rect x="10" y="14" width="1" height="1" fill="#000000"/><rect x="13" y="14" width="1" height="1" fill="#000000"/><rect x="12" y="15" width="1" height="1" fill="#000000"/></svg>
</body></html>
